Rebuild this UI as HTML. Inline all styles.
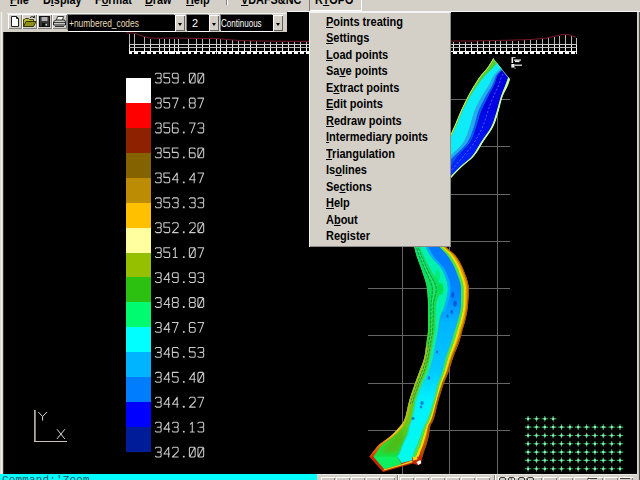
<!DOCTYPE html>
<html><head><meta charset="utf-8"><title>RTOPO</title>
<style>
html,body{margin:0;padding:0;background:#000;}
body{width:640px;height:480px;overflow:hidden;position:relative;font-family:"Liberation Sans",sans-serif;}
#app{position:absolute;left:0;top:0;width:640px;height:480px;overflow:hidden;background:#000;}
#menubar{position:absolute;left:0;top:0;width:640px;height:12px;background:#d4d0c8;overflow:hidden;}
#menubar span{position:absolute;top:-5.8px;font-weight:bold;font-size:12px;line-height:12px;color:#000;white-space:nowrap;transform:scaleX(0.905);transform-origin:0 50%;}
#leftedge{position:absolute;left:0;top:0;width:3px;height:480px;background:#dad8d0;box-shadow:inset -1px 0 0 #d8d6ce, inset -2px 0 0 #f2f2ec, 1px 0 0 #303030;}
#rightedge{position:absolute;left:637px;top:12px;width:3px;height:468px;background:#c4c4bc;box-shadow:inset 1px 0 0 #d6d6d2, inset -1px 0 0 #505048;}
#toolbar{position:absolute;left:3px;top:12px;width:284px;height:20px;background:#d4d0c8;box-shadow:inset 0 2px 0 -0px #d4d0c8;}
#tbhl{position:absolute;left:4px;top:1px;width:279px;height:1px;background:#f0f0ee;}
#mbhl{position:absolute;left:288px;top:11px;width:352px;height:1px;background:#f4f4f4;}
.tb{position:absolute;top:2px;width:14px;height:15px;overflow:hidden;background:#d4d0c8;box-shadow:inset 1px 1px 0 #fff, inset -1px -1px 0 #808080;}
.combo{position:absolute;top:3px;height:16px;background:#000;box-shadow:-1px -1px 0 #808080, 1px 1px 0 #fff;}
.dd{position:absolute;top:3px;width:10px;height:16px;background:#d4d0c8;box-shadow:inset 1px 1px 0 #fff, inset -1px -1px 0 #606060;}
.dd:after{content:"";position:absolute;left:3px;top:8px;border-left:2.5px solid transparent;border-right:2.5px solid transparent;border-top:3px solid #000;}
.ctext{position:absolute;top:1px;left:2px;color:#e8dcb8;font-size:11px;line-height:14px;white-space:nowrap;transform-origin:0 50%;}
#popup{position:absolute;left:309px;top:12px;width:142px;height:235px;background:#d4d0c8;box-shadow:inset 1px 1px 0 #f4f4f4, inset -1px -1px 0 #8c8c88;}
.mi{position:absolute;left:17px;font-weight:bold;font-size:12px;line-height:14px;color:#000;white-space:nowrap;transform:scaleX(0.915);transform-origin:0 50%;}
#rtopo{position:absolute;left:309px;top:-2px;width:53px;height:13px;box-shadow:inset 1px 1px 0 #808080, inset -1px -1px 0 #fff;}
#cmd{position:absolute;left:0;top:473.7px;width:317px;height:6px;background:#00ffff;overflow:hidden;}
#cmd span{position:absolute;left:2px;top:0px;font-family:"Liberation Mono",monospace;font-size:11px;line-height:12px;color:#205868;letter-spacing:0.15px;}
#btb{position:absolute;left:317px;top:473.7px;width:320px;height:7px;background:#d4d0c8;box-shadow:inset 0 1px 0 #e8e6e0;}
.bb{position:absolute;top:3.3px;width:14px;height:6px;background:#cfcbc3;box-shadow:inset 1px 1px 0 #fff, inset -1px 0 0 #808080;}
.bi{position:absolute;top:3.6px;width:4.5px;height:5px;border:1.2px solid #383838;border-radius:2px;}
.bk{position:absolute;top:4px;height:1.5px;background:#404040;}
.bsep{position:absolute;top:1px;width:1px;height:6px;background:#808080;box-shadow:1px 0 0 #fff;}
svg{position:absolute;left:0;top:0;}
.tb svg{position:absolute;left:0;top:0;}
</style></head><body>
<div id="app">
<svg width="640" height="480" viewBox="0 0 640 480">
<g stroke="#666666" stroke-width="1" fill="none" shape-rendering="crispEdges">
<line x1="402.5" y1="99" x2="402.5" y2="474"/>
<line x1="449.5" y1="99" x2="449.5" y2="474"/>
<line x1="497.5" y1="99" x2="497.5" y2="474"/>
<line x1="368" y1="99.5" x2="510" y2="99.5"/>
<line x1="368" y1="146.5" x2="510" y2="146.5"/>
<line x1="368" y1="194.5" x2="510" y2="194.5"/>
<line x1="368" y1="241.5" x2="510" y2="241.5"/>
<line x1="368" y1="288.5" x2="510" y2="288.5"/>
<line x1="368" y1="335.5" x2="510" y2="335.5"/>
<line x1="368" y1="383.5" x2="510" y2="383.5"/>
<line x1="368" y1="430.5" x2="510" y2="430.5"/>
</g>
<g shape-rendering="crispEdges">
<rect x="126" y="78.00" width="25" height="25.23" fill="#ffffff"/>
<rect x="126" y="102.93" width="25" height="25.23" fill="#ff0000"/>
<rect x="126" y="127.87" width="25" height="25.23" fill="#8e2200"/>
<rect x="126" y="152.80" width="25" height="25.23" fill="#846200"/>
<rect x="126" y="177.73" width="25" height="25.23" fill="#bc8c04"/>
<rect x="126" y="202.67" width="25" height="25.23" fill="#ffc000"/>
<rect x="126" y="227.60" width="25" height="25.23" fill="#ffffa0"/>
<rect x="126" y="252.53" width="25" height="25.23" fill="#94c000"/>
<rect x="126" y="277.47" width="25" height="25.23" fill="#2cc010"/>
<rect x="126" y="302.40" width="25" height="25.23" fill="#00fa70"/>
<rect x="126" y="327.33" width="25" height="25.23" fill="#00ffff"/>
<rect x="126" y="352.27" width="25" height="25.23" fill="#00b4ff"/>
<rect x="126" y="377.20" width="25" height="25.23" fill="#007cff"/>
<rect x="126" y="402.13" width="25" height="25.23" fill="#0000ff"/>
<rect x="126" y="427.07" width="25" height="25.23" fill="#001c98"/>
</g>
<g stroke="#cccccc" stroke-width="1.1" fill="none" stroke-linejoin="round" stroke-linecap="round">
<path transform="translate(155.40,73.20) scale(0.960,0.980)" d="M0,1 L1,0 L5,0 L6,1 L6,4 L5,5 L2,5 M5,5 L6,6 L6,9 L5,10 L1,10 L0,9"/>
<path transform="translate(163.90,73.20) scale(0.960,0.980)" d="M6,0 L0,0 L0,4.5 L5,4.5 L6,5.5 L6,9 L5,10 L1,10 L0,9"/>
<path transform="translate(172.40,73.20) scale(0.960,0.980)" d="M0,9 L1,10 L5,10 L6,9 L6,1 L5,0 L1,0 L0,1 L0,4 L1,5 L6,5"/>
<path transform="translate(180.90,73.20) scale(0.960,0.980)" d="M2.6,9.2 L3.4,9.2 L3.4,10 L2.6,10 Z"/>
<path transform="translate(189.40,73.20) scale(0.960,0.980)" d="M1,0 L5,0 L6,1 L6,9 L5,10 L1,10 L0,9 L0,1 Z M0.5,9.5 L5.5,0.5"/>
<path transform="translate(197.90,73.20) scale(0.960,0.980)" d="M1,0 L5,0 L6,1 L6,9 L5,10 L1,10 L0,9 L0,1 Z M0.5,9.5 L5.5,0.5"/>
<path transform="translate(155.40,98.13) scale(0.960,0.980)" d="M0,1 L1,0 L5,0 L6,1 L6,4 L5,5 L2,5 M5,5 L6,6 L6,9 L5,10 L1,10 L0,9"/>
<path transform="translate(163.90,98.13) scale(0.960,0.980)" d="M6,0 L0,0 L0,4.5 L5,4.5 L6,5.5 L6,9 L5,10 L1,10 L0,9"/>
<path transform="translate(172.40,98.13) scale(0.960,0.980)" d="M0,0 L6,0 L2,10"/>
<path transform="translate(180.90,98.13) scale(0.960,0.980)" d="M2.6,9.2 L3.4,9.2 L3.4,10 L2.6,10 Z"/>
<path transform="translate(189.40,98.13) scale(0.960,0.980)" d="M1,0 L5,0 L6,1 L6,4 L5,5 L1,5 L0,4 L0,1 Z M1,5 L0,6 L0,9 L1,10 L5,10 L6,9 L6,6 L5,5"/>
<path transform="translate(197.90,98.13) scale(0.960,0.980)" d="M0,0 L6,0 L2,10"/>
<path transform="translate(155.40,123.07) scale(0.960,0.980)" d="M0,1 L1,0 L5,0 L6,1 L6,4 L5,5 L2,5 M5,5 L6,6 L6,9 L5,10 L1,10 L0,9"/>
<path transform="translate(163.90,123.07) scale(0.960,0.980)" d="M6,0 L0,0 L0,4.5 L5,4.5 L6,5.5 L6,9 L5,10 L1,10 L0,9"/>
<path transform="translate(172.40,123.07) scale(0.960,0.980)" d="M6,1 L5,0 L1,0 L0,1 L0,9 L1,10 L5,10 L6,9 L6,6 L5,5 L0,5"/>
<path transform="translate(180.90,123.07) scale(0.960,0.980)" d="M2.6,9.2 L3.4,9.2 L3.4,10 L2.6,10 Z"/>
<path transform="translate(189.40,123.07) scale(0.960,0.980)" d="M0,0 L6,0 L2,10"/>
<path transform="translate(197.90,123.07) scale(0.960,0.980)" d="M0,1 L1,0 L5,0 L6,1 L6,4 L5,5 L2,5 M5,5 L6,6 L6,9 L5,10 L1,10 L0,9"/>
<path transform="translate(155.40,148.00) scale(0.960,0.980)" d="M0,1 L1,0 L5,0 L6,1 L6,4 L5,5 L2,5 M5,5 L6,6 L6,9 L5,10 L1,10 L0,9"/>
<path transform="translate(163.90,148.00) scale(0.960,0.980)" d="M6,0 L0,0 L0,4.5 L5,4.5 L6,5.5 L6,9 L5,10 L1,10 L0,9"/>
<path transform="translate(172.40,148.00) scale(0.960,0.980)" d="M6,0 L0,0 L0,4.5 L5,4.5 L6,5.5 L6,9 L5,10 L1,10 L0,9"/>
<path transform="translate(180.90,148.00) scale(0.960,0.980)" d="M2.6,9.2 L3.4,9.2 L3.4,10 L2.6,10 Z"/>
<path transform="translate(189.40,148.00) scale(0.960,0.980)" d="M6,1 L5,0 L1,0 L0,1 L0,9 L1,10 L5,10 L6,9 L6,6 L5,5 L0,5"/>
<path transform="translate(197.90,148.00) scale(0.960,0.980)" d="M1,0 L5,0 L6,1 L6,9 L5,10 L1,10 L0,9 L0,1 Z M0.5,9.5 L5.5,0.5"/>
<path transform="translate(155.40,172.93) scale(0.960,0.980)" d="M0,1 L1,0 L5,0 L6,1 L6,4 L5,5 L2,5 M5,5 L6,6 L6,9 L5,10 L1,10 L0,9"/>
<path transform="translate(163.90,172.93) scale(0.960,0.980)" d="M6,0 L0,0 L0,4.5 L5,4.5 L6,5.5 L6,9 L5,10 L1,10 L0,9"/>
<path transform="translate(172.40,172.93) scale(0.960,0.980)" d="M5,10 L5,0 L0,7 L6,7"/>
<path transform="translate(180.90,172.93) scale(0.960,0.980)" d="M2.6,9.2 L3.4,9.2 L3.4,10 L2.6,10 Z"/>
<path transform="translate(189.40,172.93) scale(0.960,0.980)" d="M5,10 L5,0 L0,7 L6,7"/>
<path transform="translate(197.90,172.93) scale(0.960,0.980)" d="M0,0 L6,0 L2,10"/>
<path transform="translate(155.40,197.87) scale(0.960,0.980)" d="M0,1 L1,0 L5,0 L6,1 L6,4 L5,5 L2,5 M5,5 L6,6 L6,9 L5,10 L1,10 L0,9"/>
<path transform="translate(163.90,197.87) scale(0.960,0.980)" d="M6,0 L0,0 L0,4.5 L5,4.5 L6,5.5 L6,9 L5,10 L1,10 L0,9"/>
<path transform="translate(172.40,197.87) scale(0.960,0.980)" d="M0,1 L1,0 L5,0 L6,1 L6,4 L5,5 L2,5 M5,5 L6,6 L6,9 L5,10 L1,10 L0,9"/>
<path transform="translate(180.90,197.87) scale(0.960,0.980)" d="M2.6,9.2 L3.4,9.2 L3.4,10 L2.6,10 Z"/>
<path transform="translate(189.40,197.87) scale(0.960,0.980)" d="M0,1 L1,0 L5,0 L6,1 L6,4 L5,5 L2,5 M5,5 L6,6 L6,9 L5,10 L1,10 L0,9"/>
<path transform="translate(197.90,197.87) scale(0.960,0.980)" d="M0,1 L1,0 L5,0 L6,1 L6,4 L5,5 L2,5 M5,5 L6,6 L6,9 L5,10 L1,10 L0,9"/>
<path transform="translate(155.40,222.80) scale(0.960,0.980)" d="M0,1 L1,0 L5,0 L6,1 L6,4 L5,5 L2,5 M5,5 L6,6 L6,9 L5,10 L1,10 L0,9"/>
<path transform="translate(163.90,222.80) scale(0.960,0.980)" d="M6,0 L0,0 L0,4.5 L5,4.5 L6,5.5 L6,9 L5,10 L1,10 L0,9"/>
<path transform="translate(172.40,222.80) scale(0.960,0.980)" d="M0,1 L1,0 L5,0 L6,1 L6,4 L0,10 L6,10"/>
<path transform="translate(180.90,222.80) scale(0.960,0.980)" d="M2.6,9.2 L3.4,9.2 L3.4,10 L2.6,10 Z"/>
<path transform="translate(189.40,222.80) scale(0.960,0.980)" d="M0,1 L1,0 L5,0 L6,1 L6,4 L0,10 L6,10"/>
<path transform="translate(197.90,222.80) scale(0.960,0.980)" d="M1,0 L5,0 L6,1 L6,9 L5,10 L1,10 L0,9 L0,1 Z M0.5,9.5 L5.5,0.5"/>
<path transform="translate(155.40,247.73) scale(0.960,0.980)" d="M0,1 L1,0 L5,0 L6,1 L6,4 L5,5 L2,5 M5,5 L6,6 L6,9 L5,10 L1,10 L0,9"/>
<path transform="translate(163.90,247.73) scale(0.960,0.980)" d="M6,0 L0,0 L0,4.5 L5,4.5 L6,5.5 L6,9 L5,10 L1,10 L0,9"/>
<path transform="translate(172.40,247.73) scale(0.960,0.980)" d="M1,2 L3,0 L3,10 M1,10 L5,10"/>
<path transform="translate(180.90,247.73) scale(0.960,0.980)" d="M2.6,9.2 L3.4,9.2 L3.4,10 L2.6,10 Z"/>
<path transform="translate(189.40,247.73) scale(0.960,0.980)" d="M1,0 L5,0 L6,1 L6,9 L5,10 L1,10 L0,9 L0,1 Z M0.5,9.5 L5.5,0.5"/>
<path transform="translate(197.90,247.73) scale(0.960,0.980)" d="M0,0 L6,0 L2,10"/>
<path transform="translate(155.40,272.67) scale(0.960,0.980)" d="M0,1 L1,0 L5,0 L6,1 L6,4 L5,5 L2,5 M5,5 L6,6 L6,9 L5,10 L1,10 L0,9"/>
<path transform="translate(163.90,272.67) scale(0.960,0.980)" d="M5,10 L5,0 L0,7 L6,7"/>
<path transform="translate(172.40,272.67) scale(0.960,0.980)" d="M0,9 L1,10 L5,10 L6,9 L6,1 L5,0 L1,0 L0,1 L0,4 L1,5 L6,5"/>
<path transform="translate(180.90,272.67) scale(0.960,0.980)" d="M2.6,9.2 L3.4,9.2 L3.4,10 L2.6,10 Z"/>
<path transform="translate(189.40,272.67) scale(0.960,0.980)" d="M0,9 L1,10 L5,10 L6,9 L6,1 L5,0 L1,0 L0,1 L0,4 L1,5 L6,5"/>
<path transform="translate(197.90,272.67) scale(0.960,0.980)" d="M0,1 L1,0 L5,0 L6,1 L6,4 L5,5 L2,5 M5,5 L6,6 L6,9 L5,10 L1,10 L0,9"/>
<path transform="translate(155.40,297.60) scale(0.960,0.980)" d="M0,1 L1,0 L5,0 L6,1 L6,4 L5,5 L2,5 M5,5 L6,6 L6,9 L5,10 L1,10 L0,9"/>
<path transform="translate(163.90,297.60) scale(0.960,0.980)" d="M5,10 L5,0 L0,7 L6,7"/>
<path transform="translate(172.40,297.60) scale(0.960,0.980)" d="M1,0 L5,0 L6,1 L6,4 L5,5 L1,5 L0,4 L0,1 Z M1,5 L0,6 L0,9 L1,10 L5,10 L6,9 L6,6 L5,5"/>
<path transform="translate(180.90,297.60) scale(0.960,0.980)" d="M2.6,9.2 L3.4,9.2 L3.4,10 L2.6,10 Z"/>
<path transform="translate(189.40,297.60) scale(0.960,0.980)" d="M1,0 L5,0 L6,1 L6,4 L5,5 L1,5 L0,4 L0,1 Z M1,5 L0,6 L0,9 L1,10 L5,10 L6,9 L6,6 L5,5"/>
<path transform="translate(197.90,297.60) scale(0.960,0.980)" d="M1,0 L5,0 L6,1 L6,9 L5,10 L1,10 L0,9 L0,1 Z M0.5,9.5 L5.5,0.5"/>
<path transform="translate(155.40,322.53) scale(0.960,0.980)" d="M0,1 L1,0 L5,0 L6,1 L6,4 L5,5 L2,5 M5,5 L6,6 L6,9 L5,10 L1,10 L0,9"/>
<path transform="translate(163.90,322.53) scale(0.960,0.980)" d="M5,10 L5,0 L0,7 L6,7"/>
<path transform="translate(172.40,322.53) scale(0.960,0.980)" d="M0,0 L6,0 L2,10"/>
<path transform="translate(180.90,322.53) scale(0.960,0.980)" d="M2.6,9.2 L3.4,9.2 L3.4,10 L2.6,10 Z"/>
<path transform="translate(189.40,322.53) scale(0.960,0.980)" d="M6,1 L5,0 L1,0 L0,1 L0,9 L1,10 L5,10 L6,9 L6,6 L5,5 L0,5"/>
<path transform="translate(197.90,322.53) scale(0.960,0.980)" d="M0,0 L6,0 L2,10"/>
<path transform="translate(155.40,347.47) scale(0.960,0.980)" d="M0,1 L1,0 L5,0 L6,1 L6,4 L5,5 L2,5 M5,5 L6,6 L6,9 L5,10 L1,10 L0,9"/>
<path transform="translate(163.90,347.47) scale(0.960,0.980)" d="M5,10 L5,0 L0,7 L6,7"/>
<path transform="translate(172.40,347.47) scale(0.960,0.980)" d="M6,1 L5,0 L1,0 L0,1 L0,9 L1,10 L5,10 L6,9 L6,6 L5,5 L0,5"/>
<path transform="translate(180.90,347.47) scale(0.960,0.980)" d="M2.6,9.2 L3.4,9.2 L3.4,10 L2.6,10 Z"/>
<path transform="translate(189.40,347.47) scale(0.960,0.980)" d="M6,0 L0,0 L0,4.5 L5,4.5 L6,5.5 L6,9 L5,10 L1,10 L0,9"/>
<path transform="translate(197.90,347.47) scale(0.960,0.980)" d="M0,1 L1,0 L5,0 L6,1 L6,4 L5,5 L2,5 M5,5 L6,6 L6,9 L5,10 L1,10 L0,9"/>
<path transform="translate(155.40,372.40) scale(0.960,0.980)" d="M0,1 L1,0 L5,0 L6,1 L6,4 L5,5 L2,5 M5,5 L6,6 L6,9 L5,10 L1,10 L0,9"/>
<path transform="translate(163.90,372.40) scale(0.960,0.980)" d="M5,10 L5,0 L0,7 L6,7"/>
<path transform="translate(172.40,372.40) scale(0.960,0.980)" d="M6,0 L0,0 L0,4.5 L5,4.5 L6,5.5 L6,9 L5,10 L1,10 L0,9"/>
<path transform="translate(180.90,372.40) scale(0.960,0.980)" d="M2.6,9.2 L3.4,9.2 L3.4,10 L2.6,10 Z"/>
<path transform="translate(189.40,372.40) scale(0.960,0.980)" d="M5,10 L5,0 L0,7 L6,7"/>
<path transform="translate(197.90,372.40) scale(0.960,0.980)" d="M1,0 L5,0 L6,1 L6,9 L5,10 L1,10 L0,9 L0,1 Z M0.5,9.5 L5.5,0.5"/>
<path transform="translate(155.40,397.33) scale(0.960,0.980)" d="M0,1 L1,0 L5,0 L6,1 L6,4 L5,5 L2,5 M5,5 L6,6 L6,9 L5,10 L1,10 L0,9"/>
<path transform="translate(163.90,397.33) scale(0.960,0.980)" d="M5,10 L5,0 L0,7 L6,7"/>
<path transform="translate(172.40,397.33) scale(0.960,0.980)" d="M5,10 L5,0 L0,7 L6,7"/>
<path transform="translate(180.90,397.33) scale(0.960,0.980)" d="M2.6,9.2 L3.4,9.2 L3.4,10 L2.6,10 Z"/>
<path transform="translate(189.40,397.33) scale(0.960,0.980)" d="M0,1 L1,0 L5,0 L6,1 L6,4 L0,10 L6,10"/>
<path transform="translate(197.90,397.33) scale(0.960,0.980)" d="M0,0 L6,0 L2,10"/>
<path transform="translate(155.40,422.27) scale(0.960,0.980)" d="M0,1 L1,0 L5,0 L6,1 L6,4 L5,5 L2,5 M5,5 L6,6 L6,9 L5,10 L1,10 L0,9"/>
<path transform="translate(163.90,422.27) scale(0.960,0.980)" d="M5,10 L5,0 L0,7 L6,7"/>
<path transform="translate(172.40,422.27) scale(0.960,0.980)" d="M0,1 L1,0 L5,0 L6,1 L6,4 L5,5 L2,5 M5,5 L6,6 L6,9 L5,10 L1,10 L0,9"/>
<path transform="translate(180.90,422.27) scale(0.960,0.980)" d="M2.6,9.2 L3.4,9.2 L3.4,10 L2.6,10 Z"/>
<path transform="translate(189.40,422.27) scale(0.960,0.980)" d="M1,2 L3,0 L3,10 M1,10 L5,10"/>
<path transform="translate(197.90,422.27) scale(0.960,0.980)" d="M0,1 L1,0 L5,0 L6,1 L6,4 L5,5 L2,5 M5,5 L6,6 L6,9 L5,10 L1,10 L0,9"/>
<path transform="translate(155.40,447.20) scale(0.960,0.980)" d="M0,1 L1,0 L5,0 L6,1 L6,4 L5,5 L2,5 M5,5 L6,6 L6,9 L5,10 L1,10 L0,9"/>
<path transform="translate(163.90,447.20) scale(0.960,0.980)" d="M5,10 L5,0 L0,7 L6,7"/>
<path transform="translate(172.40,447.20) scale(0.960,0.980)" d="M0,1 L1,0 L5,0 L6,1 L6,4 L0,10 L6,10"/>
<path transform="translate(180.90,447.20) scale(0.960,0.980)" d="M2.6,9.2 L3.4,9.2 L3.4,10 L2.6,10 Z"/>
<path transform="translate(189.40,447.20) scale(0.960,0.980)" d="M1,0 L5,0 L6,1 L6,9 L5,10 L1,10 L0,9 L0,1 Z M0.5,9.5 L5.5,0.5"/>
<path transform="translate(197.90,447.20) scale(0.960,0.980)" d="M1,0 L5,0 L6,1 L6,9 L5,10 L1,10 L0,9 L0,1 Z M0.5,9.5 L5.5,0.5"/>
</g>
<defs>
<linearGradient id="gblue" gradientUnits="userSpaceOnUse" x1="0" y1="247" x2="0" y2="470"><stop offset="0" stop-color="#0078ff"/><stop offset="0.22" stop-color="#0088ff"/><stop offset="0.34" stop-color="#00b4ff"/><stop offset="0.55" stop-color="#00c8ff"/><stop offset="0.68" stop-color="#00f0ff"/><stop offset="1" stop-color="#00ffe8"/></linearGradient>
<linearGradient id="ggreen" gradientUnits="userSpaceOnUse" x1="0" y1="247" x2="0" y2="470"><stop offset="0" stop-color="#00e070"/><stop offset="0.3" stop-color="#10e050"/><stop offset="0.5" stop-color="#50d018"/><stop offset="0.62" stop-color="#68c810"/><stop offset="0.78" stop-color="#78c410"/><stop offset="0.87" stop-color="#30d828"/><stop offset="1" stop-color="#00e860"/></linearGradient>
<linearGradient id="gorange" gradientUnits="userSpaceOnUse" x1="0" y1="247" x2="0" y2="470"><stop offset="0" stop-color="#e8a000"/><stop offset="0.7" stop-color="#e09000"/><stop offset="0.85" stop-color="#d86000"/><stop offset="1" stop-color="#c82000"/></linearGradient>
<linearGradient id="gupdark" gradientUnits="userSpaceOnUse" x1="0" y1="70" x2="0" y2="175"><stop offset="0" stop-color="#0000d8"/><stop offset="0.5" stop-color="#0008e8"/><stop offset="1" stop-color="#0030ff"/></linearGradient>
<filter id="soft" x="-5%" y="-5%" width="110%" height="110%"><feGaussianBlur stdDeviation="0.7"/></filter>
<linearGradient id="grim" gradientUnits="userSpaceOnUse" x1="0" y1="395" x2="0" y2="458"><stop offset="0" stop-color="#80d010"/><stop offset="0.4" stop-color="#c8d020"/><stop offset="0.62" stop-color="#f0c020"/><stop offset="0.8" stop-color="#e88010"/><stop offset="1" stop-color="#c83000"/></linearGradient>
<filter id="soft3" x="-20%" y="-20%" width="140%" height="140%"><feGaussianBlur stdDeviation="1.6"/></filter>
<filter id="soft2" x="-5%" y="-5%" width="110%" height="110%"><feGaussianBlur stdDeviation="0.45"/></filter>
<clipPath id="upclip"><polygon points="431.4,180.0 432.2,178.0 433.0,176.0 433.8,174.0 434.6,172.0 435.4,170.0 436.1,168.0 436.9,166.0 437.7,164.0 438.4,162.0 439.2,160.0 440.0,158.0 440.8,156.0 441.7,154.0 442.5,152.0 443.4,150.0 444.3,148.0 445.2,146.0 446.1,144.0 447.0,142.0 447.8,140.0 448.8,138.0 449.7,136.0 450.6,134.0 451.5,132.0 452.4,130.0 453.3,128.0 454.2,126.0 455.1,124.0 455.9,122.0 456.7,120.0 457.6,118.0 458.4,116.0 459.2,114.0 460.1,112.0 461.0,110.0 461.9,108.0 462.9,106.0 463.8,104.0 464.8,102.0 465.8,100.0 466.8,98.0 467.8,96.0 468.9,94.0 470.0,92.0 471.2,90.0 472.3,88.0 473.5,86.0 474.8,84.0 476.0,82.0 477.3,80.0 478.6,78.0 480.1,76.0 481.7,74.0 483.5,72.0 485.2,70.0 486.9,68.0 488.3,66.0 489.6,64.0 490.8,62.0 492.0,60.0 493.0,58.0 493.2,58.2 510.4,79.8 509.3,82.0 508.7,84.0 507.8,86.0 506.9,88.0 505.9,90.0 504.8,92.0 503.8,94.0 503.0,96.0 502.3,98.0 501.7,100.0 501.1,102.0 500.6,104.0 500.1,106.0 499.6,108.0 499.1,110.0 498.5,112.0 497.9,114.0 497.3,116.0 496.7,118.0 496.1,120.0 495.4,122.0 494.6,124.0 493.7,126.0 492.7,128.0 491.5,130.0 490.2,132.0 488.8,134.0 487.4,136.0 486.0,138.0 484.6,140.0 483.3,142.0 482.0,144.0 480.9,146.0 479.7,148.0 478.5,150.0 477.2,152.0 475.8,154.0 474.2,156.0 472.4,158.0 470.2,160.0 467.7,162.0 465.2,164.0 463.0,166.0 460.9,168.0 458.9,170.0 456.9,172.0 454.9,174.0 453.1,176.0 451.2,178.0 449.4,180.0"/></clipPath>
</defs>
<g filter="url(#soft)">
<g clip-path="url(#upclip)">
<polygon points="493.0,58.0 492.0,60.0 490.8,62.0 489.6,64.0 488.3,66.0 486.9,68.0 485.2,70.0 483.5,72.0 481.7,74.0 480.1,76.0 478.6,78.0 477.3,80.0 476.0,82.0 474.8,84.0 473.5,86.0 472.3,88.0 471.2,90.0 470.0,92.0 468.9,94.0 467.8,96.0 466.8,98.0 465.8,100.0 464.8,102.0 463.8,104.0 462.9,106.0 461.9,108.0 461.0,110.0 460.1,112.0 459.2,114.0 458.4,116.0 457.6,118.0 456.7,120.0 455.9,122.0 455.1,124.0 454.2,126.0 453.3,128.0 452.4,130.0 451.5,132.0 450.6,134.0 449.7,136.0 448.8,138.0 447.8,140.0 447.0,142.0 446.1,144.0 445.2,146.0 444.3,148.0 443.4,150.0 442.5,152.0 441.7,154.0 440.8,156.0 440.0,158.0 439.2,160.0 438.4,162.0 437.7,164.0 436.9,166.0 436.1,168.0 435.4,170.0 434.6,172.0 433.8,174.0 433.0,176.0 432.2,178.0 431.4,180.0 449.4,180.0 451.2,178.0 453.1,176.0 454.9,174.0 456.9,172.0 458.9,170.0 460.9,168.0 463.0,166.0 465.2,164.0 467.7,162.0 470.2,160.0 472.4,158.0 474.2,156.0 475.8,154.0 477.2,152.0 478.5,150.0 479.7,148.0 480.9,146.0 482.0,144.0 483.3,142.0 484.6,140.0 486.0,138.0 487.4,136.0 488.8,134.0 490.2,132.0 491.5,130.0 492.7,128.0 493.7,126.0 494.6,124.0 495.4,122.0 496.1,120.0 496.7,118.0 497.3,116.0 497.9,114.0 498.5,112.0 499.1,110.0 499.6,108.0 500.1,106.0 500.6,104.0 501.1,102.0 501.7,100.0 502.3,98.0 503.0,96.0 503.8,94.0 504.8,92.0 505.9,90.0 506.9,88.0 507.8,86.0 508.7,84.0 509.3,82.0 509.8,80.0 510.3,78.0 510.9,76.0 511.8,74.0 513.1,72.0 514.5,70.0 515.9,68.0 517.2,66.0 518.6,64.0 520.0,62.0 521.5,60.0 523.0,58.0" fill="#48d038"/>
<polygon points="493.0,58.0 492.0,60.0 490.8,62.0 489.6,64.0 488.3,66.0 486.9,68.0 485.2,70.0 483.5,72.0 481.7,74.0 480.1,76.0 478.6,78.0 477.3,80.0 476.0,82.0 474.8,84.0 473.5,86.0 472.3,88.0 471.2,90.0 470.0,92.0 468.9,94.0 467.8,96.0 466.8,98.0 465.8,100.0 464.8,102.0 463.8,104.0 462.9,106.0 461.9,108.0 461.0,110.0 460.1,112.0 459.2,114.0 458.4,116.0 457.6,118.0 456.7,120.0 455.9,122.0 455.1,124.0 454.2,126.0 453.3,128.0 452.4,130.0 451.5,132.0 450.6,134.0 449.7,136.0 448.8,138.0 447.8,140.0 447.0,142.0 446.1,144.0 445.2,146.0 444.3,148.0 443.4,150.0 442.5,152.0 441.7,154.0 440.8,156.0 440.0,158.0 439.2,160.0 438.4,162.0 437.7,164.0 436.9,166.0 436.1,168.0 435.4,170.0 434.6,172.0 433.8,174.0 433.0,176.0 432.2,178.0 431.4,180.0 432.7,180.0 433.5,178.0 434.3,176.0 435.1,174.0 435.9,172.0 436.7,170.0 437.4,168.0 438.2,166.0 439.0,164.0 439.7,162.0 440.5,160.0 441.3,158.0 442.1,156.0 443.0,154.0 443.8,152.0 444.7,150.0 445.6,148.0 446.5,146.0 447.4,144.0 448.3,142.0 449.1,140.0 450.1,138.0 451.0,136.0 451.9,134.0 452.8,132.0 453.7,130.0 454.6,128.0 455.5,126.0 456.4,124.0 457.2,122.0 458.0,120.0 458.9,118.0 459.7,116.0 460.5,114.0 461.4,112.0 462.3,110.0 463.2,108.0 464.2,106.0 465.1,104.0 466.1,102.0 467.1,100.0 468.1,98.0 469.1,96.0 470.2,94.0 471.3,92.0 472.5,90.0 473.6,88.0 474.8,86.0 476.1,84.0 477.3,82.0 478.6,80.0 479.9,78.0 481.4,76.0 483.0,74.0 484.8,72.0 486.5,70.0 488.2,68.0 489.6,66.0 490.9,64.0 492.1,62.0 493.3,60.0 494.3,58.0" fill="#d8dc48"/>
<polygon points="501.3,58.0 499.7,60.0 498.1,62.0 496.4,64.0 494.6,66.0 492.8,68.0 490.8,70.0 488.7,72.0 486.6,74.0 484.7,76.0 483.0,78.0 481.4,80.0 479.9,82.0 478.4,84.0 477.0,86.0 475.6,88.0 474.2,90.0 472.9,92.0 471.6,94.0 470.4,96.0 469.2,98.0 468.1,100.0 467.0,102.0 466.0,104.0 464.9,106.0 463.9,108.0 463.0,110.0 462.0,112.0 461.1,114.0 460.3,116.0 459.4,118.0 458.6,120.0 457.8,122.0 457.0,124.0 456.1,126.0 455.2,128.0 454.3,130.0 453.4,132.0 452.5,134.0 451.6,136.0 450.7,138.0 449.7,140.0 448.9,142.0 448.0,144.0 447.1,146.0 446.2,148.0 445.4,150.0 444.5,152.0 443.6,154.0 442.7,156.0 441.8,158.0 440.9,160.0 440.0,162.0 439.1,164.0 438.3,166.0 437.5,168.0 436.8,170.0 436.0,172.0 435.2,174.0 434.4,176.0 433.6,178.0 432.8,180.0 432.8,180.0 433.6,178.0 434.4,176.0 435.2,174.0 436.0,172.0 436.9,170.0 438.4,168.0 440.1,166.0 441.8,164.0 443.8,162.0 446.0,160.0 448.2,158.0 450.2,156.0 452.3,154.0 454.4,152.0 456.6,150.0 458.6,148.0 460.5,146.0 462.2,144.0 463.6,142.0 464.7,140.0 465.7,138.0 466.6,136.0 467.4,134.0 468.1,132.0 468.8,130.0 469.4,128.0 470.1,126.0 470.7,124.0 471.2,122.0 471.8,120.0 472.3,118.0 472.8,116.0 473.4,114.0 474.1,112.0 474.9,110.0 475.7,108.0 476.7,106.0 477.7,104.0 478.7,102.0 479.8,100.0 480.9,98.0 482.0,96.0 483.2,94.0 484.5,92.0 485.8,90.0 487.1,88.0 488.4,86.0 489.6,84.0 490.6,82.0 491.5,80.0 492.4,78.0 493.5,76.0 495.0,74.0 496.9,72.0 498.9,70.0 500.8,68.0 502.5,66.0 504.1,64.0 505.7,62.0 507.2,60.0 508.7,58.0" fill="#10ecf8"/>
<polygon points="508.7,58.0 507.2,60.0 505.7,62.0 504.1,64.0 502.5,66.0 500.8,68.0 498.9,70.0 496.9,72.0 495.0,74.0 493.5,76.0 492.4,78.0 491.5,80.0 490.6,82.0 489.6,84.0 488.4,86.0 487.1,88.0 485.8,90.0 484.5,92.0 483.2,94.0 482.0,96.0 480.9,98.0 479.8,100.0 478.7,102.0 477.7,104.0 476.7,106.0 475.7,108.0 474.9,110.0 474.1,112.0 473.4,114.0 472.8,116.0 472.3,118.0 471.8,120.0 471.2,122.0 470.7,124.0 470.1,126.0 469.4,128.0 468.8,130.0 468.1,132.0 467.4,134.0 466.6,136.0 465.7,138.0 464.7,140.0 463.6,142.0 462.2,144.0 460.5,146.0 458.6,148.0 456.6,150.0 454.4,152.0 452.3,154.0 450.2,156.0 448.2,158.0 446.0,160.0 443.8,162.0 441.8,164.0 440.1,166.0 438.4,168.0 436.9,170.0 436.0,172.0 435.2,174.0 434.4,176.0 433.6,178.0 432.8,180.0 434.2,180.0 435.5,178.0 436.8,176.0 438.1,174.0 439.6,172.0 441.0,170.0 442.5,168.0 444.1,166.0 445.8,164.0 447.9,162.0 450.0,160.0 452.2,158.0 454.2,156.0 456.3,154.0 458.4,152.0 460.6,150.0 462.6,148.0 464.5,146.0 466.2,144.0 467.6,142.0 468.7,140.0 469.7,138.0 470.6,136.0 471.4,134.0 472.1,132.0 472.8,130.0 473.4,128.0 474.1,126.0 474.7,124.0 475.2,122.0 475.8,120.0 476.3,118.0 476.8,116.0 477.4,114.0 478.1,112.0 478.9,110.0 479.7,108.0 480.7,106.0 481.6,104.0 482.7,102.0 483.7,100.0 484.8,98.0 485.8,96.0 487.0,94.0 488.2,92.0 489.5,90.0 490.7,88.0 491.8,86.0 492.8,84.0 493.6,82.0 494.3,80.0 495.0,78.0 495.8,76.0 497.2,74.0 499.1,72.0 501.2,70.0 503.1,68.0 504.8,66.0 506.4,64.0 508.0,62.0 509.5,60.0 511.0,58.0" fill="#20a8ff"/>
<polygon points="511.0,58.0 509.5,60.0 508.0,62.0 506.4,64.0 504.8,66.0 503.1,68.0 501.2,70.0 499.1,72.0 497.2,74.0 495.8,76.0 495.0,78.0 494.3,80.0 493.6,82.0 492.8,84.0 491.8,86.0 490.7,88.0 489.5,90.0 488.2,92.0 487.0,94.0 485.8,96.0 484.8,98.0 483.7,100.0 482.7,102.0 481.6,104.0 480.7,106.0 479.7,108.0 478.9,110.0 478.1,112.0 477.4,114.0 476.8,116.0 476.3,118.0 475.8,120.0 475.2,122.0 474.7,124.0 474.1,126.0 473.4,128.0 472.8,130.0 472.1,132.0 471.4,134.0 470.6,136.0 469.7,138.0 468.7,140.0 467.6,142.0 466.2,144.0 464.5,146.0 462.6,148.0 460.6,150.0 458.4,152.0 456.3,154.0 454.2,156.0 452.2,158.0 450.0,160.0 447.9,162.0 445.8,164.0 444.1,166.0 442.5,168.0 441.0,170.0 439.6,172.0 438.1,174.0 436.8,176.0 435.5,178.0 434.2,180.0 440.4,180.0 442.1,178.0 443.8,176.0 445.3,174.0 446.8,172.0 448.1,170.0 449.3,168.0 450.6,166.0 451.8,164.0 453.1,162.0 454.4,160.0 455.7,158.0 457.2,156.0 458.9,154.0 460.8,152.0 462.8,150.0 464.8,148.0 466.7,146.0 468.4,144.0 469.8,142.0 470.9,140.0 471.9,138.0 472.7,136.0 473.5,134.0 474.2,132.0 474.9,130.0 475.6,128.0 476.3,126.0 476.9,124.0 477.5,122.0 478.1,120.0 478.7,118.0 479.2,116.0 479.9,114.0 480.6,112.0 481.4,110.0 482.3,108.0 483.2,106.0 484.2,104.0 485.2,102.0 486.2,100.0 487.2,98.0 488.2,96.0 489.2,94.0 490.3,92.0 491.4,90.0 492.5,88.0 493.4,86.0 494.3,84.0 495.1,82.0 495.7,80.0 496.3,78.0 497.1,76.0 498.3,74.0 500.2,72.0 502.2,70.0 504.1,68.0 505.8,66.0 507.4,64.0 509.0,62.0 510.5,60.0 512.0,58.0" fill="#0058ff"/>
<polygon points="512.0,58.0 510.5,60.0 509.0,62.0 507.4,64.0 505.8,66.0 504.1,68.0 502.2,70.0 500.2,72.0 498.3,74.0 497.1,76.0 496.3,78.0 495.7,80.0 495.1,82.0 494.3,84.0 493.4,86.0 492.5,88.0 491.4,90.0 490.3,92.0 489.2,94.0 488.2,96.0 487.2,98.0 486.2,100.0 485.2,102.0 484.2,104.0 483.2,106.0 482.3,108.0 481.4,110.0 480.6,112.0 479.9,114.0 479.2,116.0 478.7,118.0 478.1,120.0 477.5,122.0 476.9,124.0 476.3,126.0 475.6,128.0 474.9,130.0 474.2,132.0 473.5,134.0 472.7,136.0 471.9,138.0 470.9,140.0 469.8,142.0 468.4,144.0 466.7,146.0 464.8,148.0 462.8,150.0 460.8,152.0 458.9,154.0 457.2,156.0 455.7,158.0 454.4,160.0 453.1,162.0 451.8,164.0 450.6,166.0 449.3,168.0 448.1,170.0 446.8,172.0 445.3,174.0 443.8,176.0 442.1,178.0 440.4,180.0 447.4,180.0 449.2,178.0 451.1,176.0 452.9,174.0 454.9,172.0 456.9,170.0 458.9,168.0 461.0,166.0 463.2,164.0 465.7,162.0 468.2,160.0 470.5,158.0 472.2,156.0 473.8,154.0 475.2,152.0 476.4,150.0 477.6,148.0 478.8,146.0 479.9,144.0 481.2,142.0 482.5,140.0 483.9,138.0 485.3,136.0 486.7,134.0 488.2,132.0 489.5,130.0 490.7,128.0 491.7,126.0 492.6,124.0 493.4,122.0 494.1,120.0 494.7,118.0 495.3,116.0 495.9,114.0 496.6,112.0 497.1,110.0 497.7,108.0 498.2,106.0 498.8,104.0 499.3,102.0 499.9,100.0 500.5,98.0 501.1,96.0 501.9,94.0 502.6,92.0 503.4,90.0 504.2,88.0 505.1,86.0 505.8,84.0 506.6,82.0 507.3,80.0 508.0,78.0 508.9,76.0 509.9,74.0 511.1,72.0 512.5,70.0 513.9,68.0 515.2,66.0 516.6,64.0 518.0,62.0 519.5,60.0 521.0,58.0" fill="url(#gupdark)"/>
<polygon points="521.0,58.0 519.5,60.0 518.0,62.0 516.6,64.0 515.2,66.0 513.9,68.0 512.5,70.0 511.1,72.0 509.9,74.0 508.9,76.0 508.0,78.0 507.3,80.0 506.6,82.0 505.8,84.0 505.1,86.0 504.2,88.0 503.4,90.0 502.6,92.0 501.9,94.0 501.1,96.0 500.5,98.0 499.9,100.0 499.3,102.0 498.8,104.0 498.2,106.0 497.7,108.0 497.1,110.0 496.6,112.0 495.9,114.0 495.3,116.0 494.7,118.0 494.1,120.0 493.4,122.0 492.6,124.0 491.7,126.0 490.7,128.0 489.5,130.0 488.2,132.0 486.7,134.0 485.3,136.0 483.9,138.0 482.5,140.0 481.2,142.0 479.9,144.0 478.8,146.0 477.6,148.0 476.4,150.0 475.2,152.0 473.8,154.0 472.2,156.0 470.5,158.0 468.2,160.0 465.7,162.0 463.2,164.0 461.0,166.0 458.9,168.0 456.9,170.0 454.9,172.0 452.9,174.0 451.1,176.0 449.2,178.0 447.4,180.0 449.4,180.0 451.2,178.0 453.1,176.0 454.9,174.0 456.9,172.0 458.9,170.0 460.9,168.0 463.0,166.0 465.2,164.0 467.7,162.0 470.2,160.0 472.4,158.0 474.2,156.0 475.8,154.0 477.2,152.0 478.5,150.0 479.7,148.0 480.9,146.0 482.0,144.0 483.3,142.0 484.6,140.0 486.0,138.0 487.4,136.0 488.8,134.0 490.2,132.0 491.5,130.0 492.7,128.0 493.7,126.0 494.6,124.0 495.4,122.0 496.1,120.0 496.7,118.0 497.3,116.0 497.9,114.0 498.5,112.0 499.1,110.0 499.6,108.0 500.1,106.0 500.6,104.0 501.1,102.0 501.7,100.0 502.3,98.0 503.0,96.0 503.8,94.0 504.8,92.0 505.9,90.0 506.9,88.0 507.8,86.0 508.7,84.0 509.3,82.0 509.8,80.0 510.3,78.0 510.9,76.0 511.8,74.0 513.1,72.0 514.5,70.0 515.9,68.0 517.2,66.0 518.6,64.0 520.0,62.0 521.5,60.0 523.0,58.0" fill="#d0f4a8"/>
<polyline points="493.2,58.2 510.4,79.8" fill="none" stroke="#b8e8b0" stroke-width="1.2" opacity="0.8"/>
<polyline points="503.1,74.0 502.0,76.0 501.1,78.0 500.5,80.0 499.8,82.0 499.1,84.0 498.3,86.0 497.4,88.0 496.4,90.0 495.5,92.0 494.6,94.0 493.7,96.0 492.8,98.0 492.0,100.0 491.2,102.0 490.5,104.0 489.7,106.0 489.0,108.0 488.3,110.0 487.6,112.0 486.9,114.0 486.3,116.0 485.7,118.0 485.1,120.0 484.4,122.0 483.8,124.0 483.0,126.0 482.1,128.0 481.2,130.0 480.2,132.0 479.1,134.0 478.0,136.0 476.9,138.0 475.7,140.0 474.5,142.0 473.2,144.0 471.7,146.0 470.2,148.0 468.6,150.0 467.0,152.0 465.3,154.0 463.7,156.0 462.1,158.0 460.3,160.0 458.4,162.0 456.5,164.0 454.8,166.0 453.1,168.0 451.5,170.0 449.8,172.0 448.1,174.0 446.4,176.0 444.7,178.0 442.9,180.0" fill="none" stroke="#a0b8ff" stroke-width="0.7" stroke-dasharray="2 2" opacity="0.7"/>
</g>
<polygon points="412.0,240.0 412.7,242.0 413.3,244.0 413.9,246.0 414.5,248.0 415.0,250.0 415.5,252.0 416.0,254.0 416.6,256.0 417.3,258.0 418.0,260.0 418.7,262.0 419.5,264.0 420.2,266.0 421.0,268.0 421.7,270.0 422.3,272.0 423.0,274.0 423.7,276.0 424.4,278.0 425.0,280.0 425.6,282.0 426.2,284.0 426.6,286.0 426.9,288.0 427.1,290.0 427.3,292.0 427.5,294.0 427.6,296.0 427.8,298.0 427.9,300.0 428.0,302.0 428.0,304.0 428.0,306.0 428.0,308.0 428.0,310.0 428.0,312.0 428.0,314.0 428.0,316.0 428.0,318.0 428.0,320.0 428.0,322.0 428.0,324.0 428.0,326.0 428.0,328.0 428.0,330.0 427.9,332.0 427.7,334.0 427.5,336.0 427.1,338.0 426.8,340.0 426.6,342.0 426.3,344.0 426.1,346.0 425.8,348.0 425.6,350.0 425.3,352.0 425.0,354.0 424.6,356.0 424.2,358.0 423.6,360.0 423.0,362.0 422.3,364.0 421.5,366.0 420.7,368.0 419.9,370.0 419.2,372.0 418.5,374.0 417.7,376.0 417.0,378.0 416.2,380.0 415.5,382.0 414.8,384.0 414.1,386.0 413.4,388.0 412.7,390.0 412.0,392.0 411.3,394.0 410.7,396.0 410.1,398.0 409.4,400.0 408.9,402.0 408.4,404.0 407.9,406.0 407.5,408.0 407.1,410.0 406.6,412.0 406.2,414.0 405.7,416.0 405.0,418.0 404.3,420.0 403.4,422.0 401.9,424.0 400.2,426.0 398.5,428.0 396.7,430.0 394.9,432.0 392.9,434.0 390.6,436.0 388.1,438.0 385.4,440.0 382.7,442.0 379.8,444.0 377.7,446.0 376.1,448.0 374.5,450.0 372.9,452.0 371.4,454.0 369.9,456.0 369.4,456.7 422.5,456.7 422.7,456.0 423.3,454.0 423.9,452.0 424.6,450.0 425.3,448.0 426.1,446.0 426.7,444.0 427.2,442.0 427.8,440.0 428.3,438.0 428.7,436.0 429.1,434.0 429.4,432.0 429.7,430.0 430.0,428.0 430.3,426.0 431.1,424.0 432.5,422.0 433.3,420.0 434.0,418.0 434.6,416.0 435.1,414.0 435.6,412.0 436.1,410.0 436.6,408.0 437.0,406.0 437.5,404.0 438.1,402.0 438.6,400.0 439.2,398.0 439.8,396.0 440.4,394.0 441.0,392.0 441.6,390.0 442.2,388.0 442.9,386.0 443.6,384.0 444.3,382.0 445.2,380.0 446.0,378.0 446.9,376.0 447.7,374.0 448.5,372.0 449.2,370.0 449.8,368.0 450.4,366.0 451.1,364.0 451.7,362.0 452.3,360.0 453.0,358.0 453.7,356.0 454.4,354.0 455.2,352.0 456.1,350.0 456.9,348.0 457.7,346.0 458.5,344.0 459.2,342.0 459.8,340.0 460.4,338.0 460.9,336.0 461.4,334.0 462.0,332.0 462.5,330.0 463.1,328.0 463.7,326.0 464.3,324.0 464.9,322.0 465.4,320.0 465.9,318.0 466.3,316.0 466.7,314.0 467.1,312.0 467.4,310.0 467.7,308.0 467.9,306.0 468.1,304.0 468.2,302.0 468.3,300.0 468.5,298.0 468.6,296.0 468.7,294.0 468.7,292.0 468.7,290.0 468.7,288.0 468.6,286.0 468.2,284.0 467.8,282.0 467.2,280.0 466.6,278.0 465.9,276.0 465.1,274.0 464.4,272.0 463.6,270.0 462.8,268.0 461.9,266.0 460.9,264.0 459.8,262.0 458.6,260.0 457.3,258.0 455.9,256.0 454.1,254.0 451.8,252.0 449.3,250.0 447.0,248.0 445.2,246.0 443.6,244.0 442.2,242.0 441.0,240.0" fill="url(#gorange)"/>
<polygon points="370.8,455 369.4,456.7 383,472 413,463.5 418,465.2 421,463.3 422.5,456.7 423,455" fill="#c82800"/>
<polygon points="412.7,455 413.2,460.5 417.5,459.5 417,455" fill="#f0d800"/>
<polygon points="374.5,455 373.5,456.7 384.2,469.3 401.5,464.3 397.5,456.7 398,455" fill="#08f060"/>
<polygon points="384.2,469.3 383.2,470.8 412.6,462.3 412.2,460.6 401.5,464.3" fill="#e8d020"/>
<polygon points="398,455 397.5,456.7 401.5,463 412.2,460.2 412.5,456.7 412.7,455" fill="#00ffe8"/>
<polygon points="416.5,462 418.3,465 421.3,463.2 420.5,460" fill="#ffffff"/>
<polygon points="435.6,240.0 437.3,242.0 439.0,244.0 440.7,246.0 442.6,248.0 444.7,250.0 446.9,252.0 448.8,254.0 450.5,256.0 451.9,258.0 453.2,260.0 454.4,262.0 455.5,264.0 456.5,266.0 457.4,268.0 458.3,270.0 459.0,272.0 459.8,274.0 460.5,276.0 461.3,278.0 462.0,280.0 462.6,282.0 463.0,284.0 463.4,286.0 463.5,288.0 463.6,290.0 463.5,292.0 463.5,294.0 463.5,296.0 463.5,298.0 463.4,300.0 463.4,302.0 463.3,304.0 463.3,306.0 463.1,308.0 462.8,310.0 462.4,312.0 461.9,314.0 461.5,316.0 461.0,318.0 460.5,320.0 460.0,322.0 459.3,324.0 458.7,326.0 458.1,328.0 457.5,330.0 456.9,332.0 456.3,334.0 455.8,336.0 455.2,338.0 454.6,340.0 453.9,342.0 453.2,344.0 452.5,346.0 451.7,348.0 450.9,350.0 450.2,352.0 449.4,354.0 448.7,356.0 448.1,358.0 447.5,360.0 447.0,362.0 446.5,364.0 445.9,366.0 445.4,368.0 444.8,370.0 444.2,372.0 443.6,374.0 442.8,376.0 442.0,378.0 441.2,380.0 440.4,382.0 439.7,384.0 439.1,386.0 438.5,388.0 438.0,390.0 437.5,392.0 437.0,394.0 436.4,396.0 435.9,398.0 435.3,400.0 434.8,402.0 434.2,404.0 433.7,406.0 433.1,408.0 432.6,410.0 432.0,412.0 431.4,414.0 430.7,416.0 430.0,418.0 429.2,420.0 428.4,422.0 427.1,424.0 426.2,426.0 425.5,428.0 425.0,430.0 424.4,432.0 423.9,434.0 423.3,436.0 422.6,438.0 422.0,440.0 421.3,442.0 420.7,444.0 420.0,446.0 419.0,448.0 418.2,450.0 417.4,452.0 416.7,454.0 416.0,456.0 415.8,456.7 418.7,456.7 418.9,456.0 419.6,454.0 420.2,452.0 421.0,450.0 421.8,448.0 422.6,446.0 423.3,444.0 423.9,442.0 424.5,440.0 425.1,438.0 425.6,436.0 426.2,434.0 426.6,432.0 427.0,430.0 427.4,428.0 428.0,426.0 428.8,424.0 430.1,422.0 431.0,420.0 431.7,418.0 432.4,416.0 433.0,414.0 433.6,412.0 434.1,410.0 434.6,408.0 435.1,406.0 435.6,404.0 436.2,402.0 436.8,400.0 437.3,398.0 437.9,396.0 438.4,394.0 439.0,392.0 439.6,390.0 440.1,388.0 440.8,386.0 441.4,384.0 442.1,382.0 442.9,380.0 443.7,378.0 444.6,376.0 445.4,374.0 446.1,372.0 446.7,370.0 447.3,368.0 447.9,366.0 448.4,364.0 449.0,362.0 449.6,360.0 450.2,358.0 450.9,356.0 451.6,354.0 452.4,352.0 453.2,350.0 454.0,348.0 454.7,346.0 455.5,344.0 456.2,342.0 456.8,340.0 457.4,338.0 458.0,336.0 458.5,334.0 459.1,332.0 459.6,330.0 460.2,328.0 460.9,326.0 461.5,324.0 462.1,322.0 462.6,320.0 463.1,318.0 463.6,316.0 464.0,314.0 464.4,312.0 464.8,310.0 465.1,308.0 465.3,306.0 465.4,304.0 465.5,302.0 465.6,300.0 465.6,298.0 465.7,296.0 465.7,294.0 465.8,292.0 465.8,290.0 465.8,288.0 465.6,286.0 465.3,284.0 464.8,282.0 464.2,280.0 463.6,278.0 462.8,276.0 462.1,274.0 461.3,272.0 460.6,270.0 459.8,268.0 458.8,266.0 457.8,264.0 456.7,262.0 455.5,260.0 454.2,258.0 452.8,256.0 451.1,254.0 449.0,252.0 446.7,250.0 444.5,248.0 442.6,246.0 441.0,244.0 439.4,242.0 438.0,240.0" fill="#f0e000"/>
<polygon points="433.0,240.0 434.9,242.0 436.7,244.0 438.6,246.0 440.5,248.0 442.4,250.0 444.4,252.0 446.2,254.0 447.8,256.0 449.2,258.0 450.4,260.0 451.7,262.0 452.8,264.0 453.8,266.0 454.8,268.0 455.6,270.0 456.4,272.0 457.2,274.0 457.9,276.0 458.7,278.0 459.4,280.0 460.0,282.0 460.5,284.0 460.8,286.0 461.0,288.0 461.0,290.0 461.0,292.0 461.0,294.0 461.0,296.0 461.0,298.0 461.0,300.0 461.0,302.0 461.0,304.0 461.0,306.0 460.8,308.0 460.5,310.0 460.1,312.0 459.6,314.0 459.1,316.0 458.6,318.0 458.1,320.0 457.5,322.0 456.9,324.0 456.3,326.0 455.6,328.0 455.0,330.0 454.4,332.0 453.8,334.0 453.2,336.0 452.6,338.0 452.0,340.0 451.4,342.0 450.7,344.0 449.9,346.0 449.2,348.0 448.4,350.0 447.7,352.0 447.0,354.0 446.3,356.0 445.7,358.0 445.2,360.0 444.7,362.0 444.2,364.0 443.7,366.0 443.2,368.0 442.7,370.0 442.2,372.0 441.5,374.0 440.8,376.0 440.0,378.0 439.2,380.0 438.5,382.0 437.8,384.0 437.2,386.0 436.7,388.0 436.2,390.0 435.7,392.0 435.3,394.0 434.8,396.0 434.3,398.0 433.7,400.0 433.2,402.0 432.6,404.0 432.0,406.0 431.4,408.0 430.8,410.0 430.2,412.0 429.5,414.0 428.8,416.0 428.1,418.0 427.2,420.0 426.4,422.0 425.1,424.0 424.2,426.0 423.4,428.0 422.6,430.0 422.0,432.0 421.3,434.0 420.6,436.0 419.8,438.0 419.1,440.0 418.4,442.0 417.8,444.0 416.9,446.0 415.9,448.0 415.0,450.0 414.2,452.0 413.4,454.0 412.7,456.0 412.5,456.7 415.8,456.7 416.0,456.0 416.7,454.0 417.4,452.0 418.2,450.0 419.0,448.0 420.0,446.0 420.7,444.0 421.3,442.0 422.0,440.0 422.6,438.0 423.3,436.0 423.9,434.0 424.4,432.0 425.0,430.0 425.5,428.0 426.2,426.0 427.1,424.0 428.4,422.0 429.2,420.0 430.0,418.0 430.7,416.0 431.4,414.0 432.0,412.0 432.6,410.0 433.1,408.0 433.7,406.0 434.2,404.0 434.8,402.0 435.3,400.0 435.9,398.0 436.4,396.0 437.0,394.0 437.5,392.0 438.0,390.0 438.5,388.0 439.1,386.0 439.7,384.0 440.4,382.0 441.2,380.0 442.0,378.0 442.8,376.0 443.6,374.0 444.2,372.0 444.8,370.0 445.4,368.0 445.9,366.0 446.5,364.0 447.0,362.0 447.5,360.0 448.1,358.0 448.7,356.0 449.4,354.0 450.2,352.0 450.9,350.0 451.7,348.0 452.5,346.0 453.2,344.0 453.9,342.0 454.6,340.0 455.2,338.0 455.8,336.0 456.3,334.0 456.9,332.0 457.5,330.0 458.1,328.0 458.7,326.0 459.3,324.0 460.0,322.0 460.5,320.0 461.0,318.0 461.5,316.0 461.9,314.0 462.4,312.0 462.8,310.0 463.1,308.0 463.3,306.0 463.3,304.0 463.4,302.0 463.4,300.0 463.5,298.0 463.5,296.0 463.5,294.0 463.5,292.0 463.6,290.0 463.5,288.0 463.4,286.0 463.0,284.0 462.6,282.0 462.0,280.0 461.3,278.0 460.5,276.0 459.8,274.0 459.0,272.0 458.3,270.0 457.4,268.0 456.5,266.0 455.5,264.0 454.4,262.0 453.2,260.0 451.9,258.0 450.5,256.0 448.8,254.0 446.9,252.0 444.7,250.0 442.6,248.0 440.7,246.0 439.0,244.0 437.3,242.0 435.6,240.0" fill="#40e850"/>
<polygon points="412.0,240.0 412.7,242.0 413.3,244.0 413.9,246.0 414.5,248.0 415.0,250.0 415.5,252.0 416.0,254.0 416.6,256.0 417.3,258.0 418.0,260.0 418.7,262.0 419.5,264.0 420.2,266.0 421.0,268.0 421.7,270.0 422.3,272.0 423.0,274.0 423.7,276.0 424.4,278.0 425.0,280.0 425.6,282.0 426.2,284.0 426.6,286.0 426.9,288.0 427.1,290.0 427.3,292.0 427.5,294.0 427.6,296.0 427.8,298.0 427.9,300.0 428.0,302.0 428.0,304.0 428.0,306.0 428.0,308.0 428.0,310.0 428.0,312.0 428.0,314.0 428.0,316.0 428.0,318.0 428.0,320.0 428.0,322.0 428.0,324.0 428.0,326.0 428.0,328.0 428.0,330.0 427.9,332.0 427.7,334.0 427.5,336.0 427.1,338.0 426.8,340.0 426.6,342.0 426.3,344.0 426.1,346.0 425.8,348.0 425.6,350.0 425.3,352.0 425.0,354.0 424.6,356.0 424.2,358.0 423.6,360.0 423.0,362.0 422.3,364.0 421.5,366.0 420.7,368.0 419.9,370.0 419.2,372.0 418.5,374.0 417.7,376.0 417.0,378.0 416.2,380.0 415.5,382.0 414.8,384.0 414.1,386.0 413.4,388.0 412.7,390.0 412.0,392.0 411.3,394.0 410.7,396.0 410.1,398.0 409.4,400.0 408.9,402.0 408.4,404.0 408.0,406.0 407.6,408.0 407.2,410.0 406.8,412.0 406.4,414.0 406.0,416.0 405.5,418.0 405.1,420.0 404.5,422.0 403.9,424.0 403.0,426.0 401.6,428.0 399.9,430.0 397.9,432.0 395.8,434.0 393.7,436.0 391.1,438.0 388.4,440.0 385.7,442.0 382.8,444.0 380.8,446.0 379.4,448.0 378.0,450.0 376.6,452.0 375.2,454.0 373.9,456.0 373.5,456.7 397.0,456.7 397.3,456.0 398.3,454.0 399.2,452.0 400.0,450.0 400.8,448.0 401.5,446.0 402.3,444.0 403.1,442.0 404.1,440.0 405.1,438.0 406.0,436.0 406.8,434.0 407.3,432.0 407.7,430.0 408.2,428.0 408.7,426.0 409.4,424.0 410.2,422.0 410.8,420.0 411.3,418.0 411.7,416.0 412.1,414.0 412.5,412.0 412.9,410.0 413.2,408.0 413.6,406.0 414.0,404.0 414.5,402.0 415.0,400.0 415.6,398.0 416.2,396.0 416.9,394.0 417.6,392.0 418.4,390.0 419.2,388.0 420.0,386.0 420.8,384.0 421.6,382.0 422.6,380.0 423.6,378.0 424.6,376.0 425.4,374.0 426.2,372.0 426.8,370.0 427.4,368.0 427.9,366.0 428.4,364.0 428.9,362.0 429.3,360.0 429.8,358.0 430.2,356.0 430.6,354.0 431.0,352.0 431.4,350.0 431.7,348.0 432.1,346.0 432.5,344.0 432.8,342.0 433.2,340.0 433.6,338.0 434.0,336.0 434.4,334.0 434.8,332.0 435.0,330.0 435.1,328.0 435.3,326.0 435.3,324.0 435.4,322.0 435.5,320.0 435.6,318.0 435.7,316.0 435.7,314.0 435.8,312.0 435.8,310.0 435.9,308.0 435.9,306.0 436.1,304.0 436.6,302.0 437.3,300.0 438.1,298.0 439.0,296.0 439.8,294.0 440.5,292.0 440.9,290.0 441.0,288.0 440.6,286.0 439.8,284.0 438.7,282.0 437.4,280.0 436.0,278.0 434.6,276.0 433.2,274.0 432.0,272.0 430.9,270.0 429.8,268.0 428.8,266.0 427.7,264.0 426.7,262.0 425.7,260.0 424.7,258.0 423.8,256.0 422.9,254.0 422.0,252.0 421.1,250.0 420.4,248.0 419.7,246.0 419.0,244.0 418.5,242.0 418.0,240.0" fill="url(#ggreen)"/>
<polygon points="410.7,396.0 410.1,398.0 409.4,400.0 408.9,402.0 408.4,404.0 407.9,406.0 407.5,408.0 407.1,410.0 406.6,412.0 406.2,414.0 405.7,416.0 405.0,418.0 404.3,420.0 403.4,422.0 401.9,424.0 400.2,426.0 398.5,428.0 396.7,430.0 394.9,432.0 392.9,434.0 390.6,436.0 388.1,438.0 385.4,440.0 382.7,442.0 379.8,444.0 377.7,446.0 376.1,448.0 374.5,450.0 372.9,452.0 371.4,454.0 369.9,456.0 369.4,456.7 373.5,456.7 373.9,456.0 375.2,454.0 376.6,452.0 378.0,450.0 379.4,448.0 380.8,446.0 382.8,444.0 385.7,442.0 388.4,440.0 391.1,438.0 393.7,436.0 395.8,434.0 397.9,432.0 399.9,430.0 401.6,428.0 403.0,426.0 403.9,424.0 404.5,422.0 405.1,420.0 405.5,418.0 406.0,416.0 406.4,414.0 406.8,412.0 407.2,410.0 407.6,408.0 408.0,406.0 408.4,404.0 408.9,402.0 409.4,400.0 410.1,398.0 410.7,396.0" fill="url(#grim)"/>
<g filter="url(#soft3)"><polygon points="395,436 403,429 404,441 397,452 382,453 386,446" fill="#58b410" opacity="0.7"/></g>
<polygon points="418.0,240.0 418.5,242.0 419.0,244.0 419.7,246.0 420.4,248.0 421.1,250.0 422.0,252.0 422.9,254.0 423.8,256.0 424.7,258.0 425.7,260.0 426.7,262.0 427.7,264.0 428.8,266.0 429.8,268.0 430.9,270.0 432.0,272.0 433.2,274.0 434.6,276.0 436.0,278.0 437.4,280.0 438.7,282.0 439.8,284.0 440.6,286.0 441.0,288.0 440.9,290.0 440.5,292.0 439.8,294.0 439.0,296.0 438.1,298.0 437.3,300.0 436.6,302.0 436.1,304.0 435.9,306.0 435.9,308.0 435.8,310.0 435.8,312.0 435.7,314.0 435.7,316.0 435.6,318.0 435.5,320.0 435.4,322.0 435.3,324.0 435.3,326.0 435.1,328.0 435.0,330.0 434.8,332.0 434.4,334.0 434.0,336.0 433.6,338.0 433.2,340.0 432.8,342.0 432.5,344.0 432.1,346.0 431.7,348.0 431.4,350.0 431.0,352.0 430.6,354.0 430.2,356.0 429.8,358.0 429.3,360.0 428.9,362.0 428.4,364.0 427.9,366.0 427.4,368.0 426.8,370.0 426.2,372.0 425.4,374.0 424.6,376.0 423.6,378.0 422.6,380.0 421.6,382.0 420.8,384.0 420.0,386.0 419.2,388.0 418.4,390.0 417.6,392.0 416.9,394.0 416.2,396.0 415.6,398.0 415.0,400.0 414.5,402.0 414.0,404.0 413.6,406.0 413.2,408.0 412.9,410.0 412.5,412.0 412.1,414.0 411.7,416.0 411.3,418.0 410.8,420.0 410.2,422.0 409.4,424.0 408.7,426.0 408.2,428.0 407.7,430.0 407.3,432.0 406.8,434.0 406.0,436.0 405.1,438.0 404.1,440.0 403.1,442.0 402.3,444.0 401.5,446.0 400.8,448.0 400.0,450.0 399.2,452.0 398.3,454.0 397.3,456.0 397.0,456.7 398.0,456.7 398.3,456.0 399.3,454.0 400.2,452.0 401.0,450.0 401.8,448.0 402.5,446.0 403.3,444.0 404.1,442.0 405.1,440.0 406.1,438.0 407.0,436.0 407.8,434.0 408.3,432.0 408.7,430.0 409.2,428.0 409.7,426.0 410.4,424.0 411.4,422.0 412.0,420.0 412.6,418.0 413.1,416.0 413.6,414.0 414.0,412.0 414.4,410.0 414.8,408.0 415.2,406.0 415.7,404.0 416.2,402.0 416.7,400.0 417.4,398.0 418.0,396.0 418.7,394.0 419.5,392.0 420.3,390.0 421.1,388.0 421.9,386.0 422.7,384.0 423.7,382.0 424.7,380.0 425.8,378.0 426.9,376.0 427.9,374.0 428.7,372.0 429.4,370.0 430.1,368.0 430.7,366.0 431.2,364.0 431.8,362.0 432.3,360.0 432.8,358.0 433.2,356.0 433.6,354.0 434.0,352.0 434.4,350.0 434.8,348.0 435.1,346.0 435.5,344.0 435.8,342.0 436.2,340.0 436.6,338.0 436.9,336.0 437.3,334.0 437.7,332.0 438.0,330.0 438.3,328.0 438.6,326.0 438.9,324.0 439.2,322.0 439.5,320.0 439.9,318.0 440.4,316.0 441.2,314.0 442.1,312.0 443.1,310.0 444.0,308.0 444.7,306.0 445.3,304.0 445.8,302.0 446.3,300.0 446.8,298.0 447.2,296.0 447.6,294.0 447.8,292.0 448.0,290.0 448.0,288.0 447.8,286.0 447.5,284.0 447.1,282.0 446.5,280.0 445.8,278.0 445.1,276.0 444.3,274.0 443.4,272.0 442.5,270.0 441.2,268.0 439.7,266.0 437.9,264.0 436.0,262.0 434.1,260.0 432.4,258.0 430.9,256.0 429.6,254.0 428.4,252.0 427.3,250.0 426.4,248.0 425.6,246.0 425.0,244.0 424.4,242.0 424.0,240.0" fill="#00f0b0"/>
<polygon points="424.0,240.0 424.4,242.0 425.0,244.0 425.6,246.0 426.4,248.0 427.3,250.0 428.4,252.0 429.6,254.0 430.9,256.0 432.4,258.0 434.1,260.0 436.0,262.0 437.9,264.0 439.7,266.0 441.2,268.0 442.5,270.0 443.4,272.0 444.3,274.0 445.1,276.0 445.8,278.0 446.5,280.0 447.1,282.0 447.5,284.0 447.8,286.0 448.0,288.0 448.0,290.0 447.8,292.0 447.6,294.0 447.2,296.0 446.8,298.0 446.3,300.0 445.8,302.0 445.3,304.0 444.7,306.0 444.0,308.0 443.1,310.0 442.1,312.0 441.2,314.0 440.4,316.0 439.9,318.0 439.5,320.0 439.2,322.0 438.9,324.0 438.6,326.0 438.3,328.0 438.0,330.0 437.7,332.0 437.3,334.0 436.9,336.0 436.6,338.0 436.2,340.0 435.8,342.0 435.5,344.0 435.1,346.0 434.8,348.0 434.4,350.0 434.0,352.0 433.6,354.0 433.2,356.0 432.8,358.0 432.3,360.0 431.8,362.0 431.2,364.0 430.7,366.0 430.1,368.0 429.4,370.0 428.7,372.0 427.9,374.0 426.9,376.0 425.8,378.0 424.7,380.0 423.7,382.0 422.7,384.0 421.9,386.0 421.1,388.0 420.3,390.0 419.5,392.0 418.7,394.0 418.0,396.0 417.4,398.0 416.7,400.0 416.2,402.0 415.7,404.0 415.2,406.0 414.8,408.0 414.4,410.0 414.0,412.0 413.6,414.0 413.1,416.0 412.6,418.0 412.0,420.0 411.4,422.0 410.4,424.0 409.7,426.0 409.2,428.0 408.7,430.0 408.3,432.0 407.8,434.0 407.0,436.0 406.1,438.0 405.1,440.0 404.1,442.0 403.3,444.0 402.5,446.0 401.8,448.0 401.0,450.0 400.2,452.0 399.3,454.0 398.3,456.0 398.0,456.7 412.5,456.7 412.7,456.0 413.4,454.0 414.2,452.0 415.0,450.0 415.9,448.0 416.9,446.0 417.8,444.0 418.4,442.0 419.1,440.0 419.8,438.0 420.6,436.0 421.3,434.0 422.0,432.0 422.6,430.0 423.4,428.0 424.2,426.0 425.1,424.0 426.4,422.0 427.2,420.0 428.1,418.0 428.8,416.0 429.5,414.0 430.2,412.0 430.8,410.0 431.4,408.0 432.0,406.0 432.6,404.0 433.2,402.0 433.7,400.0 434.3,398.0 434.8,396.0 435.3,394.0 435.7,392.0 436.2,390.0 436.7,388.0 437.2,386.0 437.8,384.0 438.5,382.0 439.2,380.0 440.0,378.0 440.8,376.0 441.5,374.0 442.2,372.0 442.7,370.0 443.2,368.0 443.7,366.0 444.2,364.0 444.7,362.0 445.2,360.0 445.7,358.0 446.3,356.0 447.0,354.0 447.7,352.0 448.4,350.0 449.2,348.0 449.9,346.0 450.7,344.0 451.4,342.0 452.0,340.0 452.6,338.0 453.2,336.0 453.8,334.0 454.4,332.0 455.0,330.0 455.6,328.0 456.3,326.0 456.9,324.0 457.5,322.0 458.1,320.0 458.6,318.0 459.1,316.0 459.6,314.0 460.1,312.0 460.5,310.0 460.8,308.0 461.0,306.0 461.0,304.0 461.0,302.0 461.0,300.0 461.0,298.0 461.0,296.0 461.0,294.0 461.0,292.0 461.0,290.0 461.0,288.0 460.8,286.0 460.5,284.0 460.0,282.0 459.4,280.0 458.7,278.0 457.9,276.0 457.2,274.0 456.4,272.0 455.6,270.0 454.8,268.0 453.8,266.0 452.8,264.0 451.7,262.0 450.4,260.0 449.2,258.0 447.8,256.0 446.2,254.0 444.4,252.0 442.4,250.0 440.5,248.0 438.6,246.0 436.7,244.0 434.9,242.0 433.0,240.0" fill="url(#gblue)"/>
<polygon points="423.7,240.0 424.1,242.0 424.7,244.0 425.3,246.0 426.1,248.0 427.0,250.0 428.1,252.0 429.3,254.0 430.6,256.0 432.1,258.0 433.8,260.0 435.7,262.0 437.6,264.0 439.4,266.0 440.9,268.0 442.2,270.0 443.1,272.0 444.0,274.0 444.8,276.0 445.5,278.0 446.2,280.0 446.8,282.0 447.2,284.0 447.5,286.0 447.7,288.0 447.7,290.0 447.5,292.0 447.3,294.0 446.9,296.0 446.5,298.0 446.0,300.0 445.5,302.0 445.0,304.0 444.4,306.0 443.7,308.0 442.8,310.0 441.8,312.0 444.7,312.0 445.7,310.0 446.6,308.0 447.3,306.0 447.9,304.0 448.4,302.0 448.9,300.0 449.4,298.0 449.8,296.0 450.2,294.0 450.4,292.0 450.6,290.0 450.6,288.0 450.4,286.0 450.1,284.0 449.7,282.0 449.1,280.0 448.4,278.0 447.7,276.0 446.9,274.0 446.0,272.0 445.1,270.0 443.8,268.0 442.3,266.0 440.5,264.0 438.6,262.0 436.7,260.0 435.0,258.0 433.5,256.0 432.2,254.0 431.0,252.0 429.9,250.0 429.0,248.0 428.2,246.0 427.6,244.0 427.0,242.0 426.6,240.0" fill="#00b8ff" opacity="0.85"/>
<polygon points="439.9,240.0 441.1,242.0 442.5,244.0 444.1,246.0 445.9,248.0 448.2,250.0 450.7,252.0 453.0,254.0 454.8,256.0 456.2,258.0 457.5,260.0 458.7,262.0 459.8,264.0 460.8,266.0 461.7,268.0 462.5,270.0 463.3,272.0 464.0,274.0 464.8,276.0 465.5,278.0 466.1,280.0 466.7,282.0 467.1,284.0 467.5,286.0 467.6,288.0 467.6,290.0 467.6,292.0 467.6,294.0 467.5,296.0 467.4,298.0 467.2,300.0 467.1,302.0 467.0,304.0 466.8,306.0 466.6,308.0 466.3,310.0 466.0,312.0 465.6,314.0 465.2,316.0 464.8,318.0 464.3,320.0 463.8,322.0 463.2,324.0 462.6,326.0 462.0,328.0 461.4,330.0 460.9,332.0 460.3,334.0 459.8,336.0 459.3,338.0 458.1,340.0 457.5,342.0 456.8,344.0 456.0,346.0 455.2,348.0 454.4,350.0 453.5,352.0 452.7,354.0 452.0,356.0 451.3,358.0 450.6,360.0 450.0,362.0 449.4,364.0 448.7,366.0 448.1,368.0 447.5,370.0 446.8,372.0 446.0,374.0 445.2,376.0 444.3,378.0 443.5,380.0 442.6,382.0 441.9,384.0 441.2,386.0 440.5,388.0 439.9,390.0 439.3,392.0 438.7,394.0 438.1,396.0 437.5,398.0 436.9,400.0 436.4,402.0 435.8,404.0 435.3,406.0 434.9,408.0 434.4,410.0 433.9,412.0 433.4,414.0 432.9,416.0 432.3,418.0 431.6,420.0 430.8,422.0 429.4,424.0 428.6,426.0 428.3,428.0 428.0,430.0 427.7,432.0 427.4,434.0 427.0,436.0 426.6,438.0 426.1,440.0 425.5,442.0 425.0,444.0 424.4,446.0 423.6,448.0 422.9,450.0 422.2,452.0 421.6,454.0 421.0,456.0 420.8,456.7 422.5,456.7 422.7,456.0 423.3,454.0 423.9,452.0 424.6,450.0 425.3,448.0 426.1,446.0 426.7,444.0 427.2,442.0 427.8,440.0 428.3,438.0 428.7,436.0 429.1,434.0 429.4,432.0 429.7,430.0 430.0,428.0 430.3,426.0 431.1,424.0 432.5,422.0 433.3,420.0 434.0,418.0 434.6,416.0 435.1,414.0 435.6,412.0 436.1,410.0 436.6,408.0 437.0,406.0 437.5,404.0 438.1,402.0 438.6,400.0 439.2,398.0 439.8,396.0 440.4,394.0 441.0,392.0 441.6,390.0 442.2,388.0 442.9,386.0 443.6,384.0 444.3,382.0 445.2,380.0 446.0,378.0 446.9,376.0 447.7,374.0 448.5,372.0 449.2,370.0 449.8,368.0 450.4,366.0 451.1,364.0 451.7,362.0 452.3,360.0 453.0,358.0 453.7,356.0 454.4,354.0 455.2,352.0 456.1,350.0 456.9,348.0 457.7,346.0 458.5,344.0 459.2,342.0 459.8,340.0 460.4,338.0 460.9,336.0 461.4,334.0 462.0,332.0 462.5,330.0 463.1,328.0 463.7,326.0 464.3,324.0 464.9,322.0 465.4,320.0 465.9,318.0 466.3,316.0 466.7,314.0 467.1,312.0 467.4,310.0 467.7,308.0 467.9,306.0 468.1,304.0 468.2,302.0 468.3,300.0 468.5,298.0 468.6,296.0 468.7,294.0 468.7,292.0 468.7,290.0 468.7,288.0 468.6,286.0 468.2,284.0 467.8,282.0 467.2,280.0 466.6,278.0 465.9,276.0 465.1,274.0 464.4,272.0 463.6,270.0 462.8,268.0 461.9,266.0 460.9,264.0 459.8,262.0 458.6,260.0 457.3,258.0 455.9,256.0 454.1,254.0 451.8,252.0 449.3,250.0 447.0,248.0 445.2,246.0 443.6,244.0 442.2,242.0 441.0,240.0" fill="#9a5400" opacity="0.85"/>
<polygon points="426.1,346.0 425.8,348.0 425.6,350.0 425.3,352.0 425.0,354.0 424.6,356.0 424.2,358.0 423.6,360.0 423.0,362.0 422.3,364.0 421.5,366.0 420.7,368.0 419.9,370.0 419.2,372.0 418.5,374.0 417.7,376.0 417.0,378.0 416.2,380.0 415.5,382.0 414.8,384.0 414.1,386.0 413.4,388.0 412.7,390.0 412.0,392.0 411.3,394.0 410.7,396.0 410.1,398.0 409.4,400.0 408.9,402.0 408.4,404.0 407.9,406.0 407.5,408.0 407.1,410.0 406.6,412.0 406.2,414.0 405.7,416.0 405.0,418.0 404.3,420.0 403.4,422.0 401.9,424.0 404.1,424.0 405.6,422.0 406.5,420.0 407.2,418.0 407.9,416.0 408.4,414.0 408.8,412.0 409.3,410.0 409.7,408.0 410.1,406.0 410.6,404.0 411.1,402.0 411.6,400.0 412.3,398.0 412.9,396.0 413.5,394.0 414.2,392.0 414.9,390.0 415.6,388.0 416.3,386.0 417.0,384.0 417.7,382.0 418.4,380.0 419.2,378.0 419.9,376.0 420.7,374.0 421.4,372.0 422.1,370.0 422.9,368.0 423.7,366.0 424.5,364.0 425.2,362.0 425.8,360.0 426.4,358.0 426.8,356.0 427.2,354.0 427.5,352.0 427.8,350.0 428.0,348.0 428.3,346.0" fill="#b4c020" opacity="0.85"/>
</g>
<g filter="url(#soft2)" fill="none">
<polyline points="414.3,240.0 414.9,242.0 415.5,244.0 416.1,246.0 416.7,248.0 417.3,250.0 418.0,252.0 418.6,254.0 419.3,256.0 420.1,258.0 420.9,260.0 421.8,262.0 422.6,264.0 423.5,266.0 424.3,268.0 425.2,270.0 426.0,272.0 426.9,274.0 427.8,276.0 428.8,278.0 429.7,280.0 430.6,282.0 431.3,284.0 431.9,286.0 432.3,288.0 432.4,290.0 432.3,292.0 432.2,294.0 432.0,296.0 431.7,298.0 431.4,300.0 431.2,302.0 431.1,304.0 431.0,306.0 431.0,308.0 431.0,310.0 430.9,312.0 430.9,314.0 430.9,316.0 430.9,318.0 430.9,320.0 430.8,322.0 430.8,324.0 430.8,326.0 430.7,328.0 430.7,330.0 430.5,332.0 430.3,334.0 430.0,336.0 429.6,338.0 429.3,340.0 428.9,342.0 428.7,344.0 428.4,346.0 428.1,348.0 427.8,350.0 427.5,352.0 427.1,354.0 426.7,356.0 426.3,358.0 425.8,360.0 425.2,362.0 424.6,364.0 423.9,366.0 423.3,368.0 422.5,370.0 421.8,372.0 421.1,374.0 420.3,376.0 419.5,378.0 418.6,380.0 417.8,382.0 417.1,384.0 416.3,386.0 415.6,388.0 414.9,390.0 414.2,392.0 413.5,394.0 412.8,396.0 412.2,398.0 411.6,400.0 411.0,402.0 410.5,404.0" stroke="#007838" stroke-width="0.9" stroke-dasharray="3 1.2" opacity="0.85"/>
<polyline points="416.0,240.0 416.5,242.0 417.1,244.0 417.7,246.0 418.4,248.0 419.0,250.0 419.8,252.0 420.5,254.0 421.3,256.0 422.2,258.0 423.1,260.0 424.0,262.0 424.9,264.0 425.9,266.0 426.8,268.0 427.7,270.0 428.7,272.0 429.7,274.0 430.9,276.0 432.1,278.0 433.2,280.0 434.3,282.0 435.2,284.0 435.8,286.0 436.2,288.0 436.2,290.0 436.0,292.0 435.6,294.0 435.1,296.0 434.6,298.0 434.1,300.0 433.6,302.0 433.3,304.0 433.2,306.0 433.2,308.0 433.2,310.0 433.1,312.0 433.1,314.0 433.1,316.0 433.0,318.0 433.0,320.0 432.9,322.0 432.9,324.0 432.8,326.0 432.7,328.0 432.6,330.0 432.4,332.0 432.2,334.0 431.8,336.0 431.4,338.0 431.0,340.0 430.7,342.0 430.4,344.0 430.1,346.0 429.7,348.0 429.4,350.0 429.1,352.0 428.7,354.0 428.3,356.0 427.9,358.0 427.4,360.0 426.9,362.0 426.3,364.0 425.7,366.0 425.1,368.0 424.5,370.0 423.8,372.0 423.1,374.0 422.2,376.0 421.3,378.0 420.4,380.0 419.5,382.0 418.7,384.0 418.0,386.0 417.2,388.0 416.5,390.0 415.7,392.0 415.0,394.0 414.4,396.0 413.7,398.0 413.1,400.0 412.6,402.0 412.1,404.0" stroke="#108030" stroke-width="0.9" stroke-dasharray="3 1.2" opacity="0.85"/>
<polyline points="415.1,240.0 415.7,242.0 416.3,244.0 416.9,246.0 417.5,248.0 418.2,250.0 418.9,252.0 419.6,254.0 420.3,256.0 421.1,258.0 422.0,260.0 422.9,262.0 423.8,264.0 424.7,266.0 425.6,268.0 426.5,270.0 427.3,272.0 428.3,274.0 429.4,276.0 430.4,278.0 431.5,280.0 432.4,282.0 433.2,284.0 433.9,286.0 434.2,288.0 434.3,290.0 434.2,292.0 433.9,294.0 433.5,296.0 433.1,298.0 432.8,300.0 432.4,302.0 432.2,304.0 432.1,306.0 432.1,308.0 432.1,310.0 432.0,312.0 432.0,314.0 432.0,316.0 431.9,318.0 431.9,320.0 431.9,322.0 431.8,324.0 431.8,326.0 431.7,328.0 431.6,330.0 431.5,332.0 431.2,334.0 430.9,336.0 430.5,338.0 430.1,340.0 429.8,342.0 429.5,344.0 429.2,346.0 428.9,348.0 428.6,350.0 428.3,352.0 427.9,354.0 427.5,356.0 427.1,358.0 426.6,360.0 426.1,362.0 425.5,364.0 424.8,366.0 424.2,368.0 423.5,370.0 422.8,372.0 422.1,374.0 421.3,376.0 420.4,378.0 419.5,380.0 418.7,382.0 417.9,384.0 417.1,386.0 416.4,388.0 415.7,390.0 414.9,392.0 414.3,394.0 413.6,396.0 412.9,398.0 412.3,400.0 411.8,402.0 411.3,404.0" stroke="#b0d8a0" stroke-width="0.6" opacity="0.55"/>
</g>
<g filter="url(#soft)" fill="#0038c8" opacity="0.6">
<ellipse cx="452.8" cy="295.0" rx="1.5" ry="2.9"/>
<ellipse cx="455.0" cy="303.5" rx="1.8" ry="2.9"/>
<ellipse cx="451.8" cy="312.0" rx="1.4" ry="2.1"/>
<ellipse cx="447.5" cy="316.0" rx="1.2" ry="1.6"/>
<ellipse cx="429.0" cy="378.0" rx="1.4" ry="1.7"/>
<ellipse cx="422.0" cy="403.0" rx="1.7" ry="1.9"/>
<ellipse cx="421.0" cy="407.0" rx="1.4" ry="1.4"/>
<ellipse cx="413.0" cy="418.5" rx="1.6" ry="1.6"/>
<ellipse cx="437.0" cy="352.0" rx="1.1" ry="1.4"/>
</g>
<g filter="url(#soft)"><ellipse cx="440.5" cy="289" rx="3" ry="6" fill="#00e050" opacity="0.9"/><ellipse cx="437.5" cy="276" rx="2.4" ry="6" fill="#00e868" opacity="0.7"/></g>
<g shape-rendering="crispEdges" stroke="#d8d8d8" stroke-width="1" fill="none">
<line x1="129.5" y1="33.5" x2="129.5" y2="44" stroke="#b4b4b4"/>
<line x1="129.5" y1="44" x2="129.5" y2="54" stroke="#f4f4f4"/>
<line x1="134.5" y1="33.5" x2="134.5" y2="44" stroke="#b4b4b4"/>
<line x1="134.5" y1="44" x2="134.5" y2="54" stroke="#f4f4f4"/>
<line x1="144.5" y1="37.1" x2="144.5" y2="44" stroke="#b4b4b4"/>
<line x1="144.5" y1="44" x2="144.5" y2="54" stroke="#f4f4f4"/>
<line x1="150.5" y1="38.5" x2="150.5" y2="44" stroke="#b4b4b4"/>
<line x1="150.5" y1="44" x2="150.5" y2="54" stroke="#f4f4f4"/>
<line x1="159.5" y1="38.8" x2="159.5" y2="44" stroke="#b4b4b4"/>
<line x1="159.5" y1="44" x2="159.5" y2="54" stroke="#f4f4f4"/>
<line x1="164.5" y1="38.7" x2="164.5" y2="44" stroke="#b4b4b4"/>
<line x1="164.5" y1="44" x2="164.5" y2="54" stroke="#f4f4f4"/>
<line x1="169.5" y1="38.6" x2="169.5" y2="44" stroke="#b4b4b4"/>
<line x1="169.5" y1="44" x2="169.5" y2="54" stroke="#f4f4f4"/>
<line x1="174.5" y1="38.5" x2="174.5" y2="44" stroke="#b4b4b4"/>
<line x1="174.5" y1="44" x2="174.5" y2="54" stroke="#f4f4f4"/>
<line x1="178.5" y1="38.6" x2="178.5" y2="44" stroke="#b4b4b4"/>
<line x1="178.5" y1="44" x2="178.5" y2="54" stroke="#f4f4f4"/>
<line x1="188.5" y1="38.8" x2="188.5" y2="44" stroke="#b4b4b4"/>
<line x1="188.5" y1="44" x2="188.5" y2="54" stroke="#f4f4f4"/>
<line x1="196.5" y1="39.0" x2="196.5" y2="44" stroke="#b4b4b4"/>
<line x1="196.5" y1="44" x2="196.5" y2="54" stroke="#f4f4f4"/>
<line x1="202.5" y1="39.1" x2="202.5" y2="44" stroke="#b4b4b4"/>
<line x1="202.5" y1="44" x2="202.5" y2="54" stroke="#f4f4f4"/>
<line x1="209.5" y1="39.0" x2="209.5" y2="44" stroke="#b4b4b4"/>
<line x1="209.5" y1="44" x2="209.5" y2="54" stroke="#f4f4f4"/>
<line x1="216.5" y1="39.0" x2="216.5" y2="44" stroke="#b4b4b4"/>
<line x1="216.5" y1="44" x2="216.5" y2="54" stroke="#f4f4f4"/>
<line x1="220.5" y1="39.4" x2="220.5" y2="44" stroke="#b4b4b4"/>
<line x1="220.5" y1="44" x2="220.5" y2="54" stroke="#f4f4f4"/>
<line x1="226.5" y1="39.9" x2="226.5" y2="44" stroke="#b4b4b4"/>
<line x1="226.5" y1="44" x2="226.5" y2="54" stroke="#f4f4f4"/>
<line x1="232.5" y1="40.4" x2="232.5" y2="44" stroke="#b4b4b4"/>
<line x1="232.5" y1="44" x2="232.5" y2="54" stroke="#f4f4f4"/>
<line x1="238.5" y1="40.9" x2="238.5" y2="44" stroke="#b4b4b4"/>
<line x1="238.5" y1="44" x2="238.5" y2="54" stroke="#f4f4f4"/>
<line x1="244.5" y1="41.1" x2="244.5" y2="44" stroke="#b4b4b4"/>
<line x1="244.5" y1="44" x2="244.5" y2="54" stroke="#f4f4f4"/>
<line x1="250.5" y1="41.3" x2="250.5" y2="44" stroke="#b4b4b4"/>
<line x1="250.5" y1="44" x2="250.5" y2="54" stroke="#f4f4f4"/>
<line x1="256.5" y1="41.4" x2="256.5" y2="44" stroke="#b4b4b4"/>
<line x1="256.5" y1="44" x2="256.5" y2="54" stroke="#f4f4f4"/>
<line x1="264.5" y1="41.5" x2="264.5" y2="44" stroke="#b4b4b4"/>
<line x1="264.5" y1="44" x2="264.5" y2="54" stroke="#f4f4f4"/>
<line x1="270.5" y1="41.6" x2="270.5" y2="44" stroke="#b4b4b4"/>
<line x1="270.5" y1="44" x2="270.5" y2="54" stroke="#f4f4f4"/>
<line x1="276.5" y1="41.7" x2="276.5" y2="44" stroke="#b4b4b4"/>
<line x1="276.5" y1="44" x2="276.5" y2="54" stroke="#f4f4f4"/>
<line x1="282.5" y1="41.7" x2="282.5" y2="44" stroke="#b4b4b4"/>
<line x1="282.5" y1="44" x2="282.5" y2="54" stroke="#f4f4f4"/>
<line x1="288.5" y1="41.8" x2="288.5" y2="44" stroke="#b4b4b4"/>
<line x1="288.5" y1="44" x2="288.5" y2="54" stroke="#f4f4f4"/>
<line x1="294.5" y1="41.8" x2="294.5" y2="44" stroke="#b4b4b4"/>
<line x1="294.5" y1="44" x2="294.5" y2="54" stroke="#f4f4f4"/>
<line x1="300.5" y1="41.8" x2="300.5" y2="44" stroke="#b4b4b4"/>
<line x1="300.5" y1="44" x2="300.5" y2="54" stroke="#f4f4f4"/>
<line x1="306.5" y1="41.9" x2="306.5" y2="44" stroke="#b4b4b4"/>
<line x1="306.5" y1="44" x2="306.5" y2="54" stroke="#f4f4f4"/>
<line x1="312.5" y1="41.9" x2="312.5" y2="44" stroke="#b4b4b4"/>
<line x1="312.5" y1="44" x2="312.5" y2="54" stroke="#f4f4f4"/>
<line x1="318.5" y1="42.0" x2="318.5" y2="44" stroke="#b4b4b4"/>
<line x1="318.5" y1="44" x2="318.5" y2="54" stroke="#f4f4f4"/>
<line x1="323.5" y1="42.0" x2="323.5" y2="44" stroke="#b4b4b4"/>
<line x1="323.5" y1="44" x2="323.5" y2="54" stroke="#f4f4f4"/>
<line x1="329.5" y1="42.0" x2="329.5" y2="44" stroke="#b4b4b4"/>
<line x1="329.5" y1="44" x2="329.5" y2="54" stroke="#f4f4f4"/>
<line x1="335.5" y1="42.1" x2="335.5" y2="44" stroke="#b4b4b4"/>
<line x1="335.5" y1="44" x2="335.5" y2="54" stroke="#f4f4f4"/>
<line x1="341.5" y1="42.1" x2="341.5" y2="44" stroke="#b4b4b4"/>
<line x1="341.5" y1="44" x2="341.5" y2="54" stroke="#f4f4f4"/>
<line x1="347.5" y1="42.1" x2="347.5" y2="44" stroke="#b4b4b4"/>
<line x1="347.5" y1="44" x2="347.5" y2="54" stroke="#f4f4f4"/>
<line x1="353.5" y1="42.2" x2="353.5" y2="44" stroke="#b4b4b4"/>
<line x1="353.5" y1="44" x2="353.5" y2="54" stroke="#f4f4f4"/>
<line x1="359.5" y1="42.2" x2="359.5" y2="44" stroke="#b4b4b4"/>
<line x1="359.5" y1="44" x2="359.5" y2="54" stroke="#f4f4f4"/>
<line x1="365.5" y1="42.2" x2="365.5" y2="44" stroke="#b4b4b4"/>
<line x1="365.5" y1="44" x2="365.5" y2="54" stroke="#f4f4f4"/>
<line x1="371.5" y1="42.3" x2="371.5" y2="44" stroke="#b4b4b4"/>
<line x1="371.5" y1="44" x2="371.5" y2="54" stroke="#f4f4f4"/>
<line x1="377.5" y1="42.3" x2="377.5" y2="44" stroke="#b4b4b4"/>
<line x1="377.5" y1="44" x2="377.5" y2="54" stroke="#f4f4f4"/>
<line x1="382.5" y1="42.3" x2="382.5" y2="44" stroke="#b4b4b4"/>
<line x1="382.5" y1="44" x2="382.5" y2="54" stroke="#f4f4f4"/>
<line x1="388.5" y1="42.2" x2="388.5" y2="44" stroke="#b4b4b4"/>
<line x1="388.5" y1="44" x2="388.5" y2="54" stroke="#f4f4f4"/>
<line x1="394.5" y1="42.1" x2="394.5" y2="44" stroke="#b4b4b4"/>
<line x1="394.5" y1="44" x2="394.5" y2="54" stroke="#f4f4f4"/>
<line x1="400.5" y1="42.1" x2="400.5" y2="44" stroke="#b4b4b4"/>
<line x1="400.5" y1="44" x2="400.5" y2="54" stroke="#f4f4f4"/>
<line x1="406.5" y1="42.0" x2="406.5" y2="44" stroke="#b4b4b4"/>
<line x1="406.5" y1="44" x2="406.5" y2="54" stroke="#f4f4f4"/>
<line x1="412.5" y1="41.9" x2="412.5" y2="44" stroke="#b4b4b4"/>
<line x1="412.5" y1="44" x2="412.5" y2="54" stroke="#f4f4f4"/>
<line x1="418.5" y1="41.9" x2="418.5" y2="44" stroke="#b4b4b4"/>
<line x1="418.5" y1="44" x2="418.5" y2="54" stroke="#f4f4f4"/>
<line x1="424.5" y1="41.8" x2="424.5" y2="44" stroke="#b4b4b4"/>
<line x1="424.5" y1="44" x2="424.5" y2="54" stroke="#f4f4f4"/>
<line x1="430.5" y1="41.7" x2="430.5" y2="44" stroke="#b4b4b4"/>
<line x1="430.5" y1="44" x2="430.5" y2="54" stroke="#f4f4f4"/>
<line x1="436.5" y1="41.7" x2="436.5" y2="44" stroke="#b4b4b4"/>
<line x1="436.5" y1="44" x2="436.5" y2="54" stroke="#f4f4f4"/>
<line x1="441.5" y1="41.6" x2="441.5" y2="44" stroke="#b4b4b4"/>
<line x1="441.5" y1="44" x2="441.5" y2="54" stroke="#f4f4f4"/>
<line x1="447.5" y1="41.5" x2="447.5" y2="44" stroke="#b4b4b4"/>
<line x1="447.5" y1="44" x2="447.5" y2="54" stroke="#f4f4f4"/>
<line x1="453.5" y1="41.5" x2="453.5" y2="44" stroke="#b4b4b4"/>
<line x1="453.5" y1="44" x2="453.5" y2="54" stroke="#f4f4f4"/>
<line x1="459.5" y1="41.5" x2="459.5" y2="44" stroke="#b4b4b4"/>
<line x1="459.5" y1="44" x2="459.5" y2="54" stroke="#f4f4f4"/>
<line x1="465.5" y1="41.5" x2="465.5" y2="44" stroke="#b4b4b4"/>
<line x1="465.5" y1="44" x2="465.5" y2="54" stroke="#f4f4f4"/>
<line x1="471.5" y1="41.5" x2="471.5" y2="44" stroke="#b4b4b4"/>
<line x1="471.5" y1="44" x2="471.5" y2="54" stroke="#f4f4f4"/>
<line x1="477.5" y1="41.4" x2="477.5" y2="44" stroke="#b4b4b4"/>
<line x1="477.5" y1="44" x2="477.5" y2="54" stroke="#f4f4f4"/>
<line x1="483.5" y1="41.2" x2="483.5" y2="44" stroke="#b4b4b4"/>
<line x1="483.5" y1="44" x2="483.5" y2="54" stroke="#f4f4f4"/>
<line x1="489.5" y1="41.1" x2="489.5" y2="44" stroke="#b4b4b4"/>
<line x1="489.5" y1="44" x2="489.5" y2="54" stroke="#f4f4f4"/>
<line x1="495.5" y1="41.0" x2="495.5" y2="44" stroke="#b4b4b4"/>
<line x1="495.5" y1="44" x2="495.5" y2="54" stroke="#f4f4f4"/>
<line x1="500.5" y1="40.9" x2="500.5" y2="44" stroke="#b4b4b4"/>
<line x1="500.5" y1="44" x2="500.5" y2="54" stroke="#f4f4f4"/>
<line x1="506.5" y1="40.8" x2="506.5" y2="44" stroke="#b4b4b4"/>
<line x1="506.5" y1="44" x2="506.5" y2="54" stroke="#f4f4f4"/>
<line x1="512.5" y1="40.6" x2="512.5" y2="44" stroke="#b4b4b4"/>
<line x1="512.5" y1="44" x2="512.5" y2="54" stroke="#f4f4f4"/>
<line x1="518.5" y1="40.5" x2="518.5" y2="44" stroke="#b4b4b4"/>
<line x1="518.5" y1="44" x2="518.5" y2="54" stroke="#f4f4f4"/>
<line x1="524.5" y1="40.3" x2="524.5" y2="44" stroke="#b4b4b4"/>
<line x1="524.5" y1="44" x2="524.5" y2="54" stroke="#f4f4f4"/>
<line x1="530.5" y1="40.1" x2="530.5" y2="44" stroke="#b4b4b4"/>
<line x1="530.5" y1="44" x2="530.5" y2="54" stroke="#f4f4f4"/>
<line x1="536.5" y1="39.6" x2="536.5" y2="44" stroke="#b4b4b4"/>
<line x1="536.5" y1="44" x2="536.5" y2="54" stroke="#f4f4f4"/>
<line x1="542.5" y1="39.1" x2="542.5" y2="44" stroke="#b4b4b4"/>
<line x1="542.5" y1="44" x2="542.5" y2="54" stroke="#f4f4f4"/>
<line x1="548.5" y1="38.2" x2="548.5" y2="44" stroke="#b4b4b4"/>
<line x1="548.5" y1="44" x2="548.5" y2="54" stroke="#f4f4f4"/>
<line x1="554.5" y1="37.0" x2="554.5" y2="44" stroke="#b4b4b4"/>
<line x1="554.5" y1="44" x2="554.5" y2="54" stroke="#f4f4f4"/>
<line x1="559.5" y1="35.7" x2="559.5" y2="44" stroke="#b4b4b4"/>
<line x1="559.5" y1="44" x2="559.5" y2="54" stroke="#f4f4f4"/>
<line x1="565.5" y1="35.0" x2="565.5" y2="44" stroke="#b4b4b4"/>
<line x1="565.5" y1="44" x2="565.5" y2="54" stroke="#f4f4f4"/>
<line x1="571.5" y1="36.1" x2="571.5" y2="44" stroke="#b4b4b4"/>
<line x1="571.5" y1="44" x2="571.5" y2="54" stroke="#f4f4f4"/>
<line x1="576.5" y1="37.7" x2="576.5" y2="44" stroke="#b4b4b4"/>
<line x1="576.5" y1="44" x2="576.5" y2="54" stroke="#f4f4f4"/>
<line x1="129" y1="44.5" x2="577" y2="44.5" stroke="#c8c8c8"/>
<line x1="129" y1="47.5" x2="577" y2="47.5" stroke="#b8b8b8"/>
<line x1="129" y1="51.5" x2="577" y2="51.5" stroke="#f0f0f0"/>
<line x1="129" y1="53.2" x2="577" y2="53.2" stroke="#ffffff" stroke-width="2.2" stroke-dasharray="3.4 2.5"/>
</g>
<polyline points="126.0,33.0 134.0,33.0 138.0,34.5 145.0,36.8 150.0,38.0 160.0,38.3 175.0,38.0 190.0,38.3 200.0,38.6 215.0,38.4 228.0,39.6 240.0,40.5 260.0,41.0 280.0,41.2 320.0,41.5 380.0,41.8 451.0,41.0 470.0,41.0 490.0,40.6 510.0,40.2 530.0,39.6 545.0,38.3 555.0,36.2 562.0,34.6 568.0,34.5 576.0,37.2" fill="none" stroke="#7a1a2c" stroke-width="1"/>
<g fill="#f0f0f0"><rect x="511.5" y="57.2" width="4" height="0.8"/><rect x="511.5" y="58" width="1.6" height="5"/><rect x="514" y="59.5" width="7" height="1.2"/><rect x="515" y="60.5" width="4.5" height="1.6"/><rect x="511.3" y="64" width="3.2" height="3.6"/><rect x="514.5" y="64.6" width="7.5" height="1.2"/><rect x="514.5" y="67.5" width="1" height="1.5" fill="#a0a0a0"/></g>
<g filter="url(#soft)">
<path d="M524.9,418.8 h6.4 M528.1,416.0 v5.6" stroke="#34b064" stroke-width="1.1" fill="none"/>
<rect x="527.0" y="417.7" width="2.2" height="2.2" fill="#98f4b4"/>
<path d="M533.3,418.8 h6.4 M536.5,416.0 v5.6" stroke="#34b064" stroke-width="1.1" fill="none"/>
<rect x="535.4" y="417.7" width="2.2" height="2.2" fill="#98f4b4"/>
<path d="M541.6,418.8 h6.4 M544.8,416.0 v5.6" stroke="#34b064" stroke-width="1.1" fill="none"/>
<rect x="543.7" y="417.7" width="2.2" height="2.2" fill="#98f4b4"/>
<path d="M550.0,418.8 h6.4 M553.2,416.0 v5.6" stroke="#34b064" stroke-width="1.1" fill="none"/>
<rect x="552.1" y="417.7" width="2.2" height="2.2" fill="#98f4b4"/>
<path d="M524.9,427.1 h6.4 M528.1,424.3 v5.6" stroke="#34b064" stroke-width="1.1" fill="none"/>
<rect x="527.0" y="426.0" width="2.2" height="2.2" fill="#98f4b4"/>
<path d="M533.3,427.1 h6.4 M536.5,424.3 v5.6" stroke="#34b064" stroke-width="1.1" fill="none"/>
<rect x="535.4" y="426.0" width="2.2" height="2.2" fill="#98f4b4"/>
<path d="M541.6,427.1 h6.4 M544.8,424.3 v5.6" stroke="#34b064" stroke-width="1.1" fill="none"/>
<rect x="543.7" y="426.0" width="2.2" height="2.2" fill="#98f4b4"/>
<path d="M550.0,427.1 h6.4 M553.2,424.3 v5.6" stroke="#34b064" stroke-width="1.1" fill="none"/>
<rect x="552.1" y="426.0" width="2.2" height="2.2" fill="#98f4b4"/>
<path d="M558.3,427.1 h6.4 M561.5,424.3 v5.6" stroke="#34b064" stroke-width="1.1" fill="none"/>
<rect x="560.4" y="426.0" width="2.2" height="2.2" fill="#98f4b4"/>
<path d="M566.7,427.1 h6.4 M569.9,424.3 v5.6" stroke="#34b064" stroke-width="1.1" fill="none"/>
<rect x="568.8" y="426.0" width="2.2" height="2.2" fill="#98f4b4"/>
<path d="M575.0,427.1 h6.4 M578.2,424.3 v5.6" stroke="#34b064" stroke-width="1.1" fill="none"/>
<rect x="577.1" y="426.0" width="2.2" height="2.2" fill="#98f4b4"/>
<path d="M583.4,427.1 h6.4 M586.6,424.3 v5.6" stroke="#34b064" stroke-width="1.1" fill="none"/>
<rect x="585.5" y="426.0" width="2.2" height="2.2" fill="#98f4b4"/>
<path d="M591.7,427.1 h6.4 M594.9,424.3 v5.6" stroke="#34b064" stroke-width="1.1" fill="none"/>
<rect x="593.8" y="426.0" width="2.2" height="2.2" fill="#98f4b4"/>
<path d="M600.1,427.1 h6.4 M603.3,424.3 v5.6" stroke="#34b064" stroke-width="1.1" fill="none"/>
<rect x="602.2" y="426.0" width="2.2" height="2.2" fill="#98f4b4"/>
<path d="M608.5,427.1 h6.4 M611.7,424.3 v5.6" stroke="#34b064" stroke-width="1.1" fill="none"/>
<rect x="610.6" y="426.0" width="2.2" height="2.2" fill="#98f4b4"/>
<path d="M616.8,427.1 h6.4 M620.0,424.3 v5.6" stroke="#34b064" stroke-width="1.1" fill="none"/>
<rect x="618.9" y="426.0" width="2.2" height="2.2" fill="#98f4b4"/>
<path d="M524.9,435.5 h6.4 M528.1,432.7 v5.6" stroke="#34b064" stroke-width="1.1" fill="none"/>
<rect x="527.0" y="434.4" width="2.2" height="2.2" fill="#98f4b4"/>
<path d="M533.3,435.5 h6.4 M536.5,432.7 v5.6" stroke="#34b064" stroke-width="1.1" fill="none"/>
<rect x="535.4" y="434.4" width="2.2" height="2.2" fill="#98f4b4"/>
<path d="M541.6,435.5 h6.4 M544.8,432.7 v5.6" stroke="#34b064" stroke-width="1.1" fill="none"/>
<rect x="543.7" y="434.4" width="2.2" height="2.2" fill="#98f4b4"/>
<path d="M550.0,435.5 h6.4 M553.2,432.7 v5.6" stroke="#34b064" stroke-width="1.1" fill="none"/>
<rect x="552.1" y="434.4" width="2.2" height="2.2" fill="#98f4b4"/>
<path d="M558.3,435.5 h6.4 M561.5,432.7 v5.6" stroke="#34b064" stroke-width="1.1" fill="none"/>
<rect x="560.4" y="434.4" width="2.2" height="2.2" fill="#98f4b4"/>
<path d="M566.7,435.5 h6.4 M569.9,432.7 v5.6" stroke="#34b064" stroke-width="1.1" fill="none"/>
<rect x="568.8" y="434.4" width="2.2" height="2.2" fill="#98f4b4"/>
<path d="M575.0,435.5 h6.4 M578.2,432.7 v5.6" stroke="#34b064" stroke-width="1.1" fill="none"/>
<rect x="577.1" y="434.4" width="2.2" height="2.2" fill="#98f4b4"/>
<path d="M583.4,435.5 h6.4 M586.6,432.7 v5.6" stroke="#34b064" stroke-width="1.1" fill="none"/>
<rect x="585.5" y="434.4" width="2.2" height="2.2" fill="#98f4b4"/>
<path d="M591.7,435.5 h6.4 M594.9,432.7 v5.6" stroke="#34b064" stroke-width="1.1" fill="none"/>
<rect x="593.8" y="434.4" width="2.2" height="2.2" fill="#98f4b4"/>
<path d="M600.1,435.5 h6.4 M603.3,432.7 v5.6" stroke="#34b064" stroke-width="1.1" fill="none"/>
<rect x="602.2" y="434.4" width="2.2" height="2.2" fill="#98f4b4"/>
<path d="M608.5,435.5 h6.4 M611.7,432.7 v5.6" stroke="#34b064" stroke-width="1.1" fill="none"/>
<rect x="610.6" y="434.4" width="2.2" height="2.2" fill="#98f4b4"/>
<path d="M616.8,435.5 h6.4 M620.0,432.7 v5.6" stroke="#34b064" stroke-width="1.1" fill="none"/>
<rect x="618.9" y="434.4" width="2.2" height="2.2" fill="#98f4b4"/>
<path d="M524.9,443.8 h6.4 M528.1,441.0 v5.6" stroke="#34b064" stroke-width="1.1" fill="none"/>
<rect x="527.0" y="442.7" width="2.2" height="2.2" fill="#98f4b4"/>
<path d="M533.3,443.8 h6.4 M536.5,441.0 v5.6" stroke="#34b064" stroke-width="1.1" fill="none"/>
<rect x="535.4" y="442.7" width="2.2" height="2.2" fill="#98f4b4"/>
<path d="M541.6,443.8 h6.4 M544.8,441.0 v5.6" stroke="#34b064" stroke-width="1.1" fill="none"/>
<rect x="543.7" y="442.7" width="2.2" height="2.2" fill="#98f4b4"/>
<path d="M550.0,443.8 h6.4 M553.2,441.0 v5.6" stroke="#34b064" stroke-width="1.1" fill="none"/>
<rect x="552.1" y="442.7" width="2.2" height="2.2" fill="#98f4b4"/>
<path d="M558.3,443.8 h6.4 M561.5,441.0 v5.6" stroke="#34b064" stroke-width="1.1" fill="none"/>
<rect x="560.4" y="442.7" width="2.2" height="2.2" fill="#98f4b4"/>
<path d="M566.7,443.8 h6.4 M569.9,441.0 v5.6" stroke="#34b064" stroke-width="1.1" fill="none"/>
<rect x="568.8" y="442.7" width="2.2" height="2.2" fill="#98f4b4"/>
<path d="M575.0,443.8 h6.4 M578.2,441.0 v5.6" stroke="#34b064" stroke-width="1.1" fill="none"/>
<rect x="577.1" y="442.7" width="2.2" height="2.2" fill="#98f4b4"/>
<path d="M583.4,443.8 h6.4 M586.6,441.0 v5.6" stroke="#34b064" stroke-width="1.1" fill="none"/>
<rect x="585.5" y="442.7" width="2.2" height="2.2" fill="#98f4b4"/>
<path d="M591.7,443.8 h6.4 M594.9,441.0 v5.6" stroke="#34b064" stroke-width="1.1" fill="none"/>
<rect x="593.8" y="442.7" width="2.2" height="2.2" fill="#98f4b4"/>
<path d="M600.1,443.8 h6.4 M603.3,441.0 v5.6" stroke="#34b064" stroke-width="1.1" fill="none"/>
<rect x="602.2" y="442.7" width="2.2" height="2.2" fill="#98f4b4"/>
<path d="M608.5,443.8 h6.4 M611.7,441.0 v5.6" stroke="#34b064" stroke-width="1.1" fill="none"/>
<rect x="610.6" y="442.7" width="2.2" height="2.2" fill="#98f4b4"/>
<path d="M616.8,443.8 h6.4 M620.0,441.0 v5.6" stroke="#34b064" stroke-width="1.1" fill="none"/>
<rect x="618.9" y="442.7" width="2.2" height="2.2" fill="#98f4b4"/>
<path d="M524.9,452.1 h6.4 M528.1,449.3 v5.6" stroke="#34b064" stroke-width="1.1" fill="none"/>
<rect x="527.0" y="451.0" width="2.2" height="2.2" fill="#98f4b4"/>
<path d="M533.3,452.1 h6.4 M536.5,449.3 v5.6" stroke="#34b064" stroke-width="1.1" fill="none"/>
<rect x="535.4" y="451.0" width="2.2" height="2.2" fill="#98f4b4"/>
<path d="M541.6,452.1 h6.4 M544.8,449.3 v5.6" stroke="#34b064" stroke-width="1.1" fill="none"/>
<rect x="543.7" y="451.0" width="2.2" height="2.2" fill="#98f4b4"/>
<path d="M550.0,452.1 h6.4 M553.2,449.3 v5.6" stroke="#34b064" stroke-width="1.1" fill="none"/>
<rect x="552.1" y="451.0" width="2.2" height="2.2" fill="#98f4b4"/>
<path d="M558.3,452.1 h6.4 M561.5,449.3 v5.6" stroke="#34b064" stroke-width="1.1" fill="none"/>
<rect x="560.4" y="451.0" width="2.2" height="2.2" fill="#98f4b4"/>
<path d="M566.7,452.1 h6.4 M569.9,449.3 v5.6" stroke="#34b064" stroke-width="1.1" fill="none"/>
<rect x="568.8" y="451.0" width="2.2" height="2.2" fill="#98f4b4"/>
<path d="M575.0,452.1 h6.4 M578.2,449.3 v5.6" stroke="#34b064" stroke-width="1.1" fill="none"/>
<rect x="577.1" y="451.0" width="2.2" height="2.2" fill="#98f4b4"/>
<path d="M583.4,452.1 h6.4 M586.6,449.3 v5.6" stroke="#34b064" stroke-width="1.1" fill="none"/>
<rect x="585.5" y="451.0" width="2.2" height="2.2" fill="#98f4b4"/>
<path d="M591.7,452.1 h6.4 M594.9,449.3 v5.6" stroke="#34b064" stroke-width="1.1" fill="none"/>
<rect x="593.8" y="451.0" width="2.2" height="2.2" fill="#98f4b4"/>
<path d="M600.1,452.1 h6.4 M603.3,449.3 v5.6" stroke="#34b064" stroke-width="1.1" fill="none"/>
<rect x="602.2" y="451.0" width="2.2" height="2.2" fill="#98f4b4"/>
<path d="M608.5,452.1 h6.4 M611.7,449.3 v5.6" stroke="#34b064" stroke-width="1.1" fill="none"/>
<rect x="610.6" y="451.0" width="2.2" height="2.2" fill="#98f4b4"/>
<path d="M616.8,452.1 h6.4 M620.0,449.3 v5.6" stroke="#34b064" stroke-width="1.1" fill="none"/>
<rect x="618.9" y="451.0" width="2.2" height="2.2" fill="#98f4b4"/>
<path d="M524.9,460.4 h6.4 M528.1,457.6 v5.6" stroke="#34b064" stroke-width="1.1" fill="none"/>
<rect x="527.0" y="459.3" width="2.2" height="2.2" fill="#98f4b4"/>
<path d="M533.3,460.4 h6.4 M536.5,457.6 v5.6" stroke="#34b064" stroke-width="1.1" fill="none"/>
<rect x="535.4" y="459.3" width="2.2" height="2.2" fill="#98f4b4"/>
<path d="M541.6,460.4 h6.4 M544.8,457.6 v5.6" stroke="#34b064" stroke-width="1.1" fill="none"/>
<rect x="543.7" y="459.3" width="2.2" height="2.2" fill="#98f4b4"/>
<path d="M550.0,460.4 h6.4 M553.2,457.6 v5.6" stroke="#34b064" stroke-width="1.1" fill="none"/>
<rect x="552.1" y="459.3" width="2.2" height="2.2" fill="#98f4b4"/>
<path d="M558.3,460.4 h6.4 M561.5,457.6 v5.6" stroke="#34b064" stroke-width="1.1" fill="none"/>
<rect x="560.4" y="459.3" width="2.2" height="2.2" fill="#98f4b4"/>
<path d="M566.7,460.4 h6.4 M569.9,457.6 v5.6" stroke="#34b064" stroke-width="1.1" fill="none"/>
<rect x="568.8" y="459.3" width="2.2" height="2.2" fill="#98f4b4"/>
<path d="M575.0,460.4 h6.4 M578.2,457.6 v5.6" stroke="#34b064" stroke-width="1.1" fill="none"/>
<rect x="577.1" y="459.3" width="2.2" height="2.2" fill="#98f4b4"/>
<path d="M583.4,460.4 h6.4 M586.6,457.6 v5.6" stroke="#34b064" stroke-width="1.1" fill="none"/>
<rect x="585.5" y="459.3" width="2.2" height="2.2" fill="#98f4b4"/>
<path d="M591.7,460.4 h6.4 M594.9,457.6 v5.6" stroke="#34b064" stroke-width="1.1" fill="none"/>
<rect x="593.8" y="459.3" width="2.2" height="2.2" fill="#98f4b4"/>
<path d="M600.1,460.4 h6.4 M603.3,457.6 v5.6" stroke="#34b064" stroke-width="1.1" fill="none"/>
<rect x="602.2" y="459.3" width="2.2" height="2.2" fill="#98f4b4"/>
<path d="M608.5,460.4 h6.4 M611.7,457.6 v5.6" stroke="#34b064" stroke-width="1.1" fill="none"/>
<rect x="610.6" y="459.3" width="2.2" height="2.2" fill="#98f4b4"/>
<path d="M616.8,460.4 h6.4 M620.0,457.6 v5.6" stroke="#34b064" stroke-width="1.1" fill="none"/>
<rect x="618.9" y="459.3" width="2.2" height="2.2" fill="#98f4b4"/>
<path d="M524.9,468.8 h6.4 M528.1,466.0 v5.6" stroke="#34b064" stroke-width="1.1" fill="none"/>
<rect x="527.0" y="467.7" width="2.2" height="2.2" fill="#98f4b4"/>
<path d="M533.3,468.8 h6.4 M536.5,466.0 v5.6" stroke="#34b064" stroke-width="1.1" fill="none"/>
<rect x="535.4" y="467.7" width="2.2" height="2.2" fill="#98f4b4"/>
<path d="M541.6,468.8 h6.4 M544.8,466.0 v5.6" stroke="#34b064" stroke-width="1.1" fill="none"/>
<rect x="543.7" y="467.7" width="2.2" height="2.2" fill="#98f4b4"/>
<path d="M550.0,468.8 h6.4 M553.2,466.0 v5.6" stroke="#34b064" stroke-width="1.1" fill="none"/>
<rect x="552.1" y="467.7" width="2.2" height="2.2" fill="#98f4b4"/>
<path d="M558.3,468.8 h6.4 M561.5,466.0 v5.6" stroke="#34b064" stroke-width="1.1" fill="none"/>
<rect x="560.4" y="467.7" width="2.2" height="2.2" fill="#98f4b4"/>
<path d="M566.7,468.8 h6.4 M569.9,466.0 v5.6" stroke="#34b064" stroke-width="1.1" fill="none"/>
<rect x="568.8" y="467.7" width="2.2" height="2.2" fill="#98f4b4"/>
<path d="M575.0,468.8 h6.4 M578.2,466.0 v5.6" stroke="#34b064" stroke-width="1.1" fill="none"/>
<rect x="577.1" y="467.7" width="2.2" height="2.2" fill="#98f4b4"/>
<path d="M583.4,468.8 h6.4 M586.6,466.0 v5.6" stroke="#34b064" stroke-width="1.1" fill="none"/>
<rect x="585.5" y="467.7" width="2.2" height="2.2" fill="#98f4b4"/>
<path d="M591.7,468.8 h6.4 M594.9,466.0 v5.6" stroke="#34b064" stroke-width="1.1" fill="none"/>
<rect x="593.8" y="467.7" width="2.2" height="2.2" fill="#98f4b4"/>
<path d="M600.1,468.8 h6.4 M603.3,466.0 v5.6" stroke="#34b064" stroke-width="1.1" fill="none"/>
<rect x="602.2" y="467.7" width="2.2" height="2.2" fill="#98f4b4"/>
<path d="M608.5,468.8 h6.4 M611.7,466.0 v5.6" stroke="#34b064" stroke-width="1.1" fill="none"/>
<rect x="610.6" y="467.7" width="2.2" height="2.2" fill="#98f4b4"/>
<path d="M616.8,468.8 h6.4 M620.0,466.0 v5.6" stroke="#34b064" stroke-width="1.1" fill="none"/>
<rect x="618.9" y="467.7" width="2.2" height="2.2" fill="#98f4b4"/>
</g>
<g stroke="#b8b0a0" fill="none"><path d="M34.9,410 V441.5" stroke-width="1.7"/><path d="M34,441.5 H67" stroke-width="1.1" stroke="#c8c0b0"/></g>
<g stroke="#dcdcd8" stroke-width="1" fill="none"><path d="M38.3,412 L42.6,416.5 L46.9,412 M42.6,416.5 V420.5"/><path d="M57,429.3 L64.8,438.9 M64.8,429.3 L57,438.9"/></g>
</svg>
<div id="leftedge"></div><div id="rightedge"></div>
<div id="menubar">
<span style="left:10px"><u>F</u>ile</span>
<span style="left:43px">D<u>i</u>splay</span>
<span style="left:95px">F<u>o</u>rmat</span>
<span style="left:145px"><u>D</u>raw</span>
<span style="left:186px"><u>H</u>elp</span>
<span style="left:241px"><u>V</u>DAFS&amp;NC</span>
<span style="left:315px">R<u>T</u>OPO</span>
<div id="rtopo"></div><div id="mbhl"></div>
<div style="position:absolute;left:226px;top:0;width:1px;height:5px;background:#808080"></div><div style="position:absolute;left:227px;top:0;width:1px;height:5px;background:#fff"></div>
</div>
<div id="toolbar"><div id="tbhl"></div>
<div class="tb" style="left:5px"><svg width="14" height="15" viewBox="0 0 14 15"><path d="M3.5,2.5 H8.5 L10.5,4.5 V12.5 H3.5 Z" fill="#fff" stroke="#202020" stroke-width="1"/><path d="M8.5,2.5 V4.5 H10.5" fill="none" stroke="#202020" stroke-width="1"/></svg></div>
<div class="tb" style="left:19px;width:15px"><svg width="15" height="15" viewBox="0 0 15 15"><path d="M1.5,12.5 V5.5 H2.5 L3.5,4.5 H6.5 L7.5,5.5 H11.5 V7.5" fill="#b8b838" stroke="#404000" stroke-width="1"/><path d="M1.5,12.5 L4,7.5 H14 L11.5,12.5 Z" fill="#909018" stroke="#303000" stroke-width="1"/><path d="M8,3.5 Q10.5,1.5 12.5,3.5 M12.5,3.5 V1.8 M12.5,3.5 H10.8" fill="none" stroke="#202020" stroke-width="1"/></svg></div>
<div class="tb" style="left:34px;width:15px"><svg width="15" height="15" viewBox="0 0 15 15"><rect x="2.5" y="2.5" width="10" height="10" fill="#383838" stroke="#101010"/><rect x="4.5" y="3" width="6" height="4" fill="#b0b0b0"/><rect x="5" y="9" width="5" height="3.5" fill="#101010"/><rect x="8.5" y="9.7" width="1.3" height="2" fill="#fff"/></svg></div>
<div class="tb" style="left:49px;width:15px"><svg width="15" height="15" viewBox="0 0 15 15"><path d="M4.5,6 L5.5,2.5 H11.5 L10.5,6" fill="#fff" stroke="#303030"/><path d="M1.5,8 L3.5,6 H12.5 L13.5,8 V11 H1.5 Z" fill="#c8c8c8" stroke="#202020"/><path d="M1.5,8.5 H13.5" stroke="#404040"/><path d="M3,12.5 H12" stroke="#303030"/></svg></div>
<div class="combo" style="left:65px;width:106.5px"><div class="ctext" style="left:1px;transform:scaleX(0.765)">+numbered_codes</div></div>
<div class="dd" style="left:171.5px;width:10.5px"></div>
<div class="combo" style="left:184px;width:22px"><div class="ctext" style="left:5px;color:#fff">2</div></div>
<div class="dd" style="left:206px"></div>
<div class="combo" style="left:217.5px;width:52.5px"><div class="ctext" style="left:0.7px;color:#fff;transform:scaleX(0.73)">Continuous</div></div>
<div class="dd" style="left:269.5px"></div>
</div>
<div id="popup">
<div class="mi" style="top:2.5px"><u>P</u>oints treating</div>
<div class="mi" style="top:19.0px"><u>S</u>ettings</div>
<div class="mi" style="top:35.5px"><u>L</u>oad points</div>
<div class="mi" style="top:52.0px">Sa<u>v</u>e points</div>
<div class="mi" style="top:68.5px">E<u>x</u>tract points</div>
<div class="mi" style="top:85.0px"><u>E</u>dit points</div>
<div class="mi" style="top:101.5px"><u>R</u>edraw points</div>
<div class="mi" style="top:118.0px"><u>I</u>ntermediary points</div>
<div class="mi" style="top:134.5px"><u>T</u>riangulation</div>
<div class="mi" style="top:151.0px">Is<u>o</u>lines</div>
<div class="mi" style="top:167.5px">Se<u>c</u>tions</div>
<div class="mi" style="top:184.0px"><u>H</u>elp</div>
<div class="mi" style="top:200.5px">A<u>b</u>out</div>
<div class="mi" style="top:217.0px">Register</div>
</div>
<div id="cmd"><span>Command:'Zoom</span></div>
<div id="btb"><div class="bb" style="left:3.6px"></div><div class="bb" style="left:18.8px"></div><div class="bb" style="left:33.9px"></div><div class="bb" style="left:49.1px"></div><div class="bb" style="left:64.2px"></div><div class="bb" style="left:83.2px"></div><div class="bb" style="left:98.3px"></div><div class="bb" style="left:113.5px"></div><div class="bb" style="left:128.6px"></div><div class="bb" style="left:143.8px"></div><div class="bb" style="left:158.9px"></div><div class="bb" style="left:181.0px"></div><div class="bb" style="left:196.2px"></div><div class="bb" style="left:211.3px"></div><div class="bb" style="left:226.4px"></div><div class="bb" style="left:241.6px"></div><div class="bb" style="left:256.8px"></div><div class="bb" style="left:271.9px"></div><div class="bb" style="left:287.1px"></div><div class="bb" style="left:302.2px"></div><div class="bsep" style="left:80px"></div><div class="bsep" style="left:176.7px"></div><div class="bi" style="left:182.0px"></div><div class="bi" style="left:191.3px"></div><div class="bi" style="left:201.0px"></div><div class="bi" style="left:210.2px"></div><div class="bk" style="left:271.0px;width:9px"></div><div class="bk" style="left:303.0px;width:10px"></div></div>
</div>
</body></html>
